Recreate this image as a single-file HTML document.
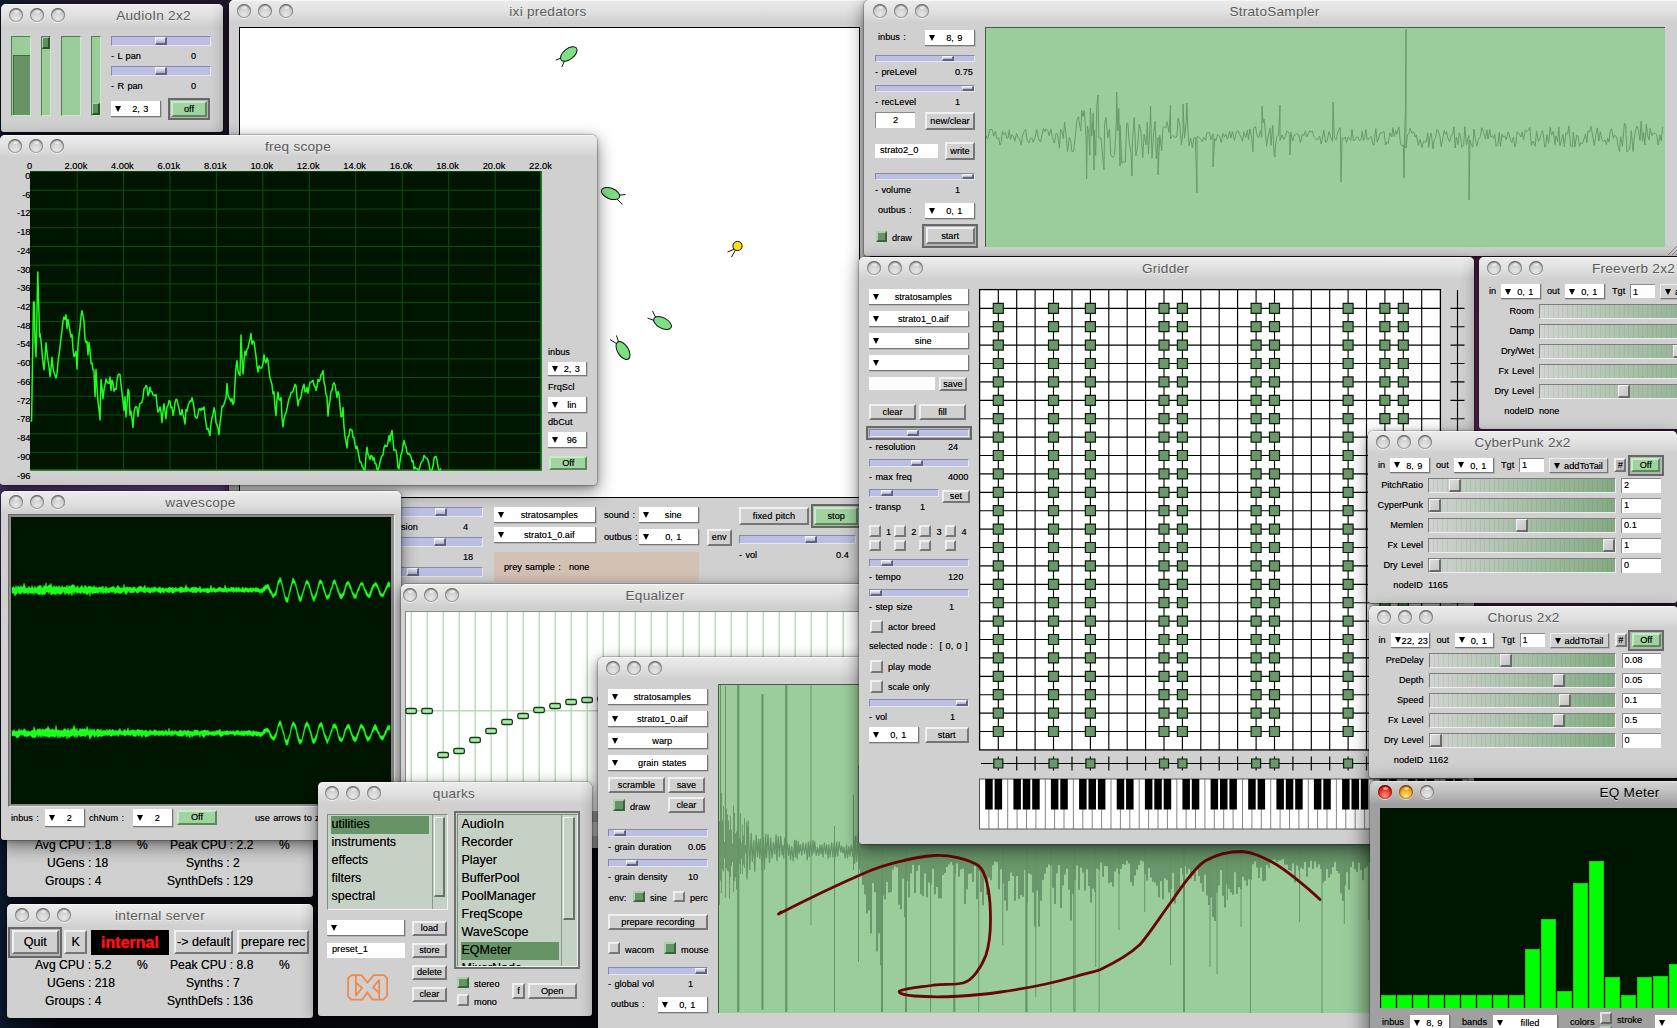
<!DOCTYPE html><html><head><meta charset="utf-8"><title>ixiQuarks</title><style>
*{box-sizing:border-box;margin:0;padding:0}
html,body{width:1677px;height:1028px;overflow:hidden;background:#0a0a12}
body{position:relative;font-family:"Liberation Sans",sans-serif;font-size:9.2px;word-spacing:.8px;color:#000;text-shadow:0 0 .45px rgba(0,0,0,.55);-webkit-font-smoothing:antialiased}
.a{position:absolute}
.win{position:absolute;background:#d0d0d0;border-radius:5px 5px 3px 3px;overflow:hidden;box-shadow:0 0 0 .5px rgba(0,0,0,.35),0 6px 17px 1px rgba(0,0,0,.46),0 1px 5px rgba(0,0,0,.25)}
.sh{position:absolute;border-radius:5px;box-shadow:0 0 0 .5px rgba(0,0,0,.35),0 6px 16px 2px rgba(0,0,0,.5)}
.tb{position:absolute;left:0;top:0;right:0;height:22px;background:linear-gradient(#ebebeb,#e2e2e2 45%,#d4d4d4 90%,#d0d0d0);border-top:1px solid #f6f6f6}
.tba{background:linear-gradient(#d2d2d2,#bdbdbd 50%,#a4a4a4);border-top:1px solid #e4e4e4}
.tt{position:absolute;top:0;height:22px;line-height:23.5px;font-size:13.6px;letter-spacing:.25px;word-spacing:0;color:#5a5a5a;white-space:pre;transform:translateX(-50%);text-shadow:0 1px 0 rgba(255,255,255,.5)}
.tl{position:absolute;width:14px;height:14px;border-radius:50%;background:radial-gradient(circle at 50% 75%,#e6e6e6 0%,#d2d2d2 45%,#bcbcbc 100%);box-shadow:inset 0 1.5px 2px rgba(0,0,0,.33),inset 0 0 0 1px rgba(0,0,0,.27),0 1px 0 rgba(255,255,255,.65)}
.tl:after{content:"";position:absolute;left:4.5px;top:2px;width:5px;height:3px;border-radius:50%;background:rgba(255,255,255,.55);filter:blur(.6px)}
.tlr{background:radial-gradient(circle at 50% 78%,#ff9a8a 0%,#ee2a1e 50%,#a80d08 100%)}
.tly{background:radial-gradient(circle at 50% 78%,#ffe88a 0%,#f5a218 50%,#b4580a 100%)}
.t{position:absolute;white-space:pre;line-height:12px;height:12px;margin-top:-6px}
.r{transform:translateX(-100%)}
.c{transform:translateX(-50%)}
.pu{position:absolute;background:#fff;border-right:1px solid #777;border-bottom:1px solid #777;box-shadow:.6px .6px 0 rgba(0,0,0,.22)}
.pu i{position:absolute;left:4px;top:50%;margin-top:-2.5px;width:0;height:0;border-left:3.2px solid transparent;border-right:3.2px solid transparent;border-top:6.4px solid #000}
.pu b{position:absolute;left:10px;right:0;top:50%;margin-top:-5.2px;line-height:12px;text-align:center;font-weight:normal;white-space:pre}
.pug{background:#d0d0d0;border-top:1px solid #eee;border-left:1px solid #eee;border-right:1px solid #777;border-bottom:1px solid #777}
.tf{position:absolute;background:#fff}
.tfb{border-top:1px solid #8a8a8a;border-left:1px solid #8a8a8a}
.tf b{position:absolute;left:5px;top:50%;margin-top:-7px;line-height:12px;font-weight:normal;white-space:pre}
.tfb b{left:2px;margin-top:-6.3px}
.bt{position:absolute;background:#d0d0d0;border-style:solid;border-width:2px;border-color:#f0f0f0 #757575 #757575 #f0f0f0;text-align:center;white-space:pre}
.bt b{position:absolute;left:0;right:0;top:50%;margin-top:-6px;line-height:12px;font-weight:normal}
.bg{background:#a0d3a0;border-color:#c6ecc6 #5a8a5a #5a8a5a #c6ecc6}
.fo{position:absolute;border:2px solid #686868;background:#b4b4b4}
.sl{position:absolute;background:#bcbfe2;border-top:1px solid #8688ad;border-left:1px solid #8688ad;border-bottom:1px solid #e4e5f5;border-right:1px solid #e4e5f5}
.kn{position:absolute;top:0;bottom:0;width:12px;background:linear-gradient(#e6e7f3,#c4c6de 60%,#a9abc6);border-style:solid;border-width:1px 2px 2px 1px;border-color:#f4f4fb #62647e #62647e #f4f4fb}
.cb{position:absolute;background:#d0d0d0;border-style:solid;border-width:2px;border-color:#efefef #777 #777 #efefef}
.cbg{background:#679467;border-color:#a9d2a9 #3c623c #3c623c #a9d2a9}
.es{position:absolute;border-top:1px solid #7d7d7d;border-left:1px solid #7d7d7d;border-bottom:1px solid #eee;border-right:1px solid #eee;background:repeating-linear-gradient(90deg,rgba(0,0,0,0) 0,rgba(0,0,0,0) 3.7px,rgba(60,100,60,.10) 3.7px,rgba(60,100,60,.10) 4.7px),linear-gradient(90deg,#d2d3d2,#b4c6b4 35%,#83aa83)}
.ek{position:absolute;top:0;bottom:0;width:12px;background:linear-gradient(135deg,#dcdcdc,#c2c6c2);border-style:solid;border-width:1px 2px 2px 1px;border-color:#f2f2f2 #6a6a6a #6a6a6a #f2f2f2}
.sv{font-size:12.1px;word-spacing:0}
.sv .t{line-height:16px;height:16px;margin-top:-8px}
.ls{font-size:12.5px}
.ls .t{line-height:16px;height:16px;margin-top:-8px}
</style></head><body><div class="a" style="left:0;top:0;width:1677px;height:1028px;background:radial-gradient(ellipse 520px 200px at 300px 488px,#8a55b0 0,#6a3f8e 40%,rgba(70,36,96,.0) 100%),radial-gradient(ellipse 300px 330px at 1500px 430px,#7a2f6c 0,#64285a 45%,rgba(60,25,60,0) 100%),linear-gradient(90deg,#0d1a30 0,rgba(10,14,26,0) 60px),linear-gradient(180deg,#241a30 0,#2a1c3a 45%,#120f1c 75%,#07080f 100%)"></div><div class="win" style="left:7px;top:783px;width:306px;height:114px;"><div class="tb"></div><div class="tl " style="left:8px;top:4px"></div><div class="tl " style="left:29px;top:4px"></div><div class="tl " style="left:50px;top:4px"></div><div class="tt" style="left:153px;">localhost server</div><div class="sv"><div class="t" style="left:28px;top:62px;">Avg CPU : 1.8</div><div class="t" style="left:130px;top:62px;">%</div><div class="t" style="left:163px;top:62px;">Peak CPU : 2.2</div><div class="t" style="left:272px;top:62px;">%</div><div class="t" style="left:40px;top:80px;">UGens : 18</div><div class="t" style="left:179px;top:80px;">Synths : 2</div><div class="t" style="left:38px;top:98px;">Groups : 4</div><div class="t" style="left:160px;top:98px;">SynthDefs : 129</div></div></div><div class="win" style="left:7px;top:904px;width:306px;height:114px;"><div class="tb"></div><div class="tl " style="left:8px;top:4px"></div><div class="tl " style="left:29px;top:4px"></div><div class="tl " style="left:50px;top:4px"></div><div class="tt" style="left:153px;">internal server</div><div class="sv" style="font-size:12.6px"><div class="fo" style="left:1.2px;top:22.7px;width:53.9px;height:30.9px;"></div><div class="bt" style="left:4.5px;top:26px;width:47.4px;height:24.4px;"><b>Quit</b></div><div class="bt" style="left:57px;top:26px;width:23.4px;height:24.4px;"><b>K</b></div><div class="a" style="left:84px;top:26px;width:78px;height:24.5px;background:#000"></div><div class="t c" style="left:123px;top:38.5px;"><span style="color:#ff1010;font-weight:bold;font-size:16px;letter-spacing:0;text-shadow:0 0 1px #ff1010">internal</span></div><div class="bt" style="left:166.5px;top:26px;width:59.9px;height:24.4px;"><b>-> default</b></div><div class="bt" style="left:230px;top:26px;width:72.4px;height:24.4px;"><b>prepare rec</b></div></div><div class="sv"><div class="t" style="left:28px;top:61px;">Avg CPU : 5.2</div><div class="t" style="left:130px;top:61px;">%</div><div class="t" style="left:163px;top:61px;">Peak CPU : 8.8</div><div class="t" style="left:272px;top:61px;">%</div><div class="t" style="left:40px;top:79px;">UGens : 218</div><div class="t" style="left:179px;top:79px;">Synths : 7</div><div class="t" style="left:38px;top:97px;">Groups : 4</div><div class="t" style="left:160px;top:97px;">SynthDefs : 136</div></div></div><div class="win" style="left:1px;top:4px;width:222px;height:128px;"><div class="tb"></div><div class="tl " style="left:8px;top:4px"></div><div class="tl " style="left:29px;top:4px"></div><div class="tl " style="left:50px;top:4px"></div><div class="tt" style="left:152.5px;">AudioIn 2x2</div><div class="a" style="left:10px;top:32px;width:19.5px;height:79.5px;background:#9bcd9b;border-top:1px solid #4f7f4f;border-left:1px solid #4f7f4f;border-right:1px solid #c9e9c9;border-bottom:1px solid #c9e9c9"></div><div class="a" style="left:11.5px;top:51px;width:17.0px;height:59.5px;background:#679467;border-top:1px solid #3f6a3f;border-left:1px solid #3f6a3f"></div><div class="a" style="left:60px;top:32px;width:19.5px;height:79.5px;background:#9bcd9b;border-top:1px solid #4f7f4f;border-left:1px solid #4f7f4f;border-right:1px solid #c9e9c9;border-bottom:1px solid #c9e9c9"></div><div class="a" style="left:40px;top:32px;width:9.5px;height:79.5px;background:#9bcd9b;border-top:1px solid #4f7f4f;border-left:1px solid #4f7f4f;border-right:1px solid #c9e9c9;border-bottom:1px solid #c9e9c9"></div><div class="a" style="left:41px;top:33px;width:7.5px;height:12px;background:#5e8f5e;border-style:solid;border-width:1px 2px 2px 1px;border-color:#a9d2a9 #2f4f2f #2f4f2f #a9d2a9"></div><div class="a" style="left:90px;top:32px;width:9.5px;height:79.5px;background:#9bcd9b;border-top:1px solid #4f7f4f;border-left:1px solid #4f7f4f;border-right:1px solid #c9e9c9;border-bottom:1px solid #c9e9c9"></div><div class="a" style="left:91px;top:99px;width:7.5px;height:12px;background:#5e8f5e;border-style:solid;border-width:1px 2px 2px 1px;border-color:#a9d2a9 #2f4f2f #2f4f2f #a9d2a9"></div><div class="sl" style="left:110px;top:32px;width:99.5px;height:9.5px;"><div class="kn" style="left:43px"></div></div><div class="t" style="left:110px;top:52px;">- L pan</div><div class="t" style="left:190px;top:52px;">0</div><div class="sl" style="left:110px;top:62px;width:99.5px;height:9.5px;"><div class="kn" style="left:43px"></div></div><div class="t" style="left:110px;top:82px;">- R pan</div><div class="t" style="left:190px;top:82px;">0</div><div class="pu" style="left:110px;top:97px;width:49.5px;height:16.1px;"><i></i><b>2, 3</b></div><div class="fo" style="left:166.7px;top:93.7px;width:42.5px;height:22.0px;"></div><div class="bt bg" style="left:170px;top:97px;width:36.0px;height:15.5px;"><b>off</b></div></div><div class="win" style="left:229px;top:0px;width:641px;height:592px;"><div class="tb"></div><div class="tl " style="left:8px;top:4px"></div><div class="tl " style="left:29px;top:4px"></div><div class="tl " style="left:50px;top:4px"></div><div class="tt" style="left:319px;">ixi predators</div><div class="a" style="left:9.5px;top:26.5px;width:621.5px;height:471.5px;background:#fff;border:1.3px solid #000"></div><svg class="a" style="left:0;top:0" width="641" height="592" viewBox="229 0 641 592"><line x1="563.8" y1="57" x2="555.8" y2="60" stroke="#111" stroke-width="1"/><line x1="565.8" y1="58" x2="561.8" y2="67" stroke="#111" stroke-width="1"/><ellipse cx="568.8" cy="54" rx="9.7" ry="5.3" transform="rotate(-38 568.8 54)" fill="#7fdf83" stroke="#111" stroke-width="1"/><line x1="616.5" y1="195.5" x2="625.5" y2="194.5" stroke="#111" stroke-width="1"/><line x1="615.5" y1="197.5" x2="622.5" y2="204.5" stroke="#111" stroke-width="1"/><ellipse cx="610.5" cy="193.5" rx="9.7" ry="5.3" transform="rotate(22 610.5 193.5)" fill="#7fdf83" stroke="#111" stroke-width="1"/><line x1="656.5" y1="319" x2="652.5" y2="311" stroke="#111" stroke-width="1"/><line x1="655.5" y1="321" x2="647.5" y2="318" stroke="#111" stroke-width="1"/><ellipse cx="662.5" cy="323" rx="9.7" ry="5.3" transform="rotate(28 662.5 323)" fill="#7fdf83" stroke="#111" stroke-width="1"/><line x1="619" y1="343.5" x2="616.5" y2="335.5" stroke="#111" stroke-width="1"/><line x1="618" y1="344.5" x2="610" y2="339.5" stroke="#111" stroke-width="1"/><ellipse cx="623" cy="350.5" rx="10" ry="5.4" transform="rotate(58 623 350.5)" fill="#7fdf83" stroke="#111" stroke-width="1"/><line x1="734.5" y1="249" x2="727.5" y2="252" stroke="#111" stroke-width="1"/><line x1="735.5" y1="250" x2="731.5" y2="257" stroke="#111" stroke-width="1"/><ellipse cx="737.5" cy="246" rx="4.6" ry="4.6" transform="rotate(0 737.5 246)" fill="#ffe600" stroke="#111" stroke-width="1"/></svg><div class="sl" style="left:151px;top:507px;width:102.5px;height:9.5px;"><div class="kn" style="left:54px"></div></div><div class="t" style="left:172px;top:527px;">sion</div><div class="t" style="left:234px;top:527px;">4</div><div class="sl" style="left:151px;top:537px;width:102.5px;height:9.5px;"><div class="kn" style="left:53px"></div></div><div class="t" style="left:234px;top:557px;">18</div><div class="sl" style="left:151px;top:567px;width:102.5px;height:9.5px;"><div class="kn" style="left:26px"></div></div><div class="pu" style="left:265px;top:507px;width:101.5px;height:15.6px;"><i></i><b>stratosamples</b></div><div class="pu" style="left:265px;top:527px;width:101.5px;height:15.6px;"><i></i><b>strato1_0.aif</b></div><div class="t" style="left:375px;top:515px;">sound :</div><div class="pu" style="left:410px;top:507px;width:59.5px;height:15.6px;"><i></i><b>sine</b></div><div class="t" style="left:375px;top:537px;">outbus :</div><div class="pu" style="left:410px;top:529px;width:59.5px;height:16.1px;"><i></i><b>0, 1</b></div><div class="bt" style="left:477.5px;top:529px;width:25.4px;height:16.9px;"><b>env</b></div><div class="a" style="left:265px;top:552px;width:205px;height:30px;background:#d3c1b4"></div><div class="t" style="left:275px;top:567px;">prey sample :</div><div class="t" style="left:340px;top:567px;">none</div><div class="bt" style="left:510px;top:507px;width:69.9px;height:17.9px;"><b>fixed pitch</b></div><div class="fo" style="left:581.7px;top:503.7px;width:50.9px;height:24.4px;"></div><div class="bt bg" style="left:585px;top:507px;width:44.4px;height:17.9px;"><b>stop</b></div><div class="sl" style="left:510px;top:535px;width:117px;height:9px;"><div class="kn" style="left:65px"></div></div><div class="t" style="left:510px;top:555px;">- vol</div><div class="t" style="left:607px;top:555px;">0.4</div></div><div class="win" style="left:864px;top:0px;width:830px;height:256px;"><div class="tb"></div><div class="tl " style="left:9px;top:4px"></div><div class="tl " style="left:30px;top:4px"></div><div class="tl " style="left:51px;top:4px"></div><div class="tt" style="left:410.5px;">StratoSampler</div><div class="t" style="left:14px;top:37px;">inbus :</div><div class="pu" style="left:61px;top:30px;width:49.5px;height:15.6px;"><i></i><b>8, 9</b></div><div class="sl" style="left:11px;top:54.5px;width:99.5px;height:7.5px;"><div class="kn" style="left:66px"></div></div><div class="t" style="left:11px;top:72px;">- preLevel</div><div class="t" style="left:91px;top:72px;">0.75</div><div class="sl" style="left:11px;top:84.5px;width:99.5px;height:7.5px;"><div class="kn" style="left:86px"></div></div><div class="t" style="left:11px;top:102px;">- recLevel</div><div class="t" style="left:91px;top:102px;">1</div><div class="tf tfb" style="left:11px;top:112.3px;width:40px;height:15.7px;"><b><span style="padding-left:15px">2</span></b></div><div class="bt" style="left:61.2px;top:112.2px;width:49.6px;height:17.5px;"><b>new/clear</b></div><div class="tf" style="left:11px;top:144px;width:63px;height:14px;"><b>strato2_0</b></div><div class="bt" style="left:81.2px;top:142.2px;width:29.6px;height:17.5px;"><b>write</b></div><div class="sl" style="left:11px;top:172.5px;width:99.5px;height:7.5px;"><div class="kn" style="left:86px"></div></div><div class="t" style="left:11px;top:190px;">- volume</div><div class="t" style="left:91px;top:190px;">1</div><div class="t" style="left:14px;top:210px;">outbus :</div><div class="pu" style="left:61px;top:203px;width:49.5px;height:15.6px;"><i></i><b>0, 1</b></div><div class="cb cbg" style="left:12px;top:231px;width:10.5px;height:11px;"></div><div class="t" style="left:28px;top:238px;">draw</div><div class="fo" style="left:58.3px;top:224.1px;width:55.6px;height:23.5px;"></div><div class="bt" style="left:61.6px;top:227.4px;width:49.1px;height:17.0px;"><b>start</b></div><div class="a" style="left:121px;top:27px;width:679.5px;height:219.5px;background:#9bcd9b;border-top:1px solid #3f5f3f;border-left:1px solid #3f5f3f"></div><svg class="a" style="left:0;top:0" width="830" height="256" viewBox="864 0 830 256"><path d="M986.0 134.8 L987.2 138.8 L988.2 137.3 L989.6 129.8 L991.1 129.3 L992.5 130.0 L993.6 136.3 L995.4 131.1 L996.7 138.4 L998.6 137.7 L1000.0 145.0 L1001.1 142.5 L1002.4 131.5 L1003.5 134.6 L1005.3 132.3 L1006.9 138.6 L1008.2 137.4 L1009.3 129.8 L1010.5 139.3 L1011.9 134.7 L1013.5 136.6 L1014.8 141.3 L1016.5 133.4 L1018.1 137.2 L1020.0 140.1 L1021.3 145.1 L1022.4 136.2 L1024.1 131.7 L1025.6 129.3 L1027.3 140.7 L1028.9 142.9 L1030.2 139.5 L1031.8 137.8 L1033.2 142.2 L1035.2 136.8 L1036.8 129.6 L1038.5 138.8 L1040.5 142.0 L1041.8 135.7 L1043.5 128.4 L1044.9 131.5 L1046.1 129.0 L1047.8 130.5 L1049.1 135.6 L1050.9 128.9 L1052.4 137.5 L1054.3 143.1 L1056.1 133.0 L1057.6 134.7 L1059.4 148.2 L1060.6 129.6 L1061.8 131.0 L1063.3 138.5 L1064.6 122.3 L1066.0 134.3 L1067.6 151.6 L1069.3 137.2 L1070.9 141.8 L1071.9 151.5 L1073.7 151.2 L1075.5 134.0 L1076.9 120.0 L1078.5 116.6 L1079.6 124.6 L1080.8 131.1 L1081.8 110.3 L1083.0 116.5 L1084.3 110.3 L1086.2 140.9 L1086.6 179.0 L1087.4 125.9 L1088.7 131.8 L1089.8 155.2 L1090.4 108.0 L1091.8 136.1 L1093.3 112.8 L1094.0 170.0 L1094.4 130.0 L1095.7 155.5 L1096.8 106.7 L1098.0 95.0 L1098.8 137.8 L1099.9 138.4 L1101.0 137.8 L1102.9 159.0 L1104.0 170.0 L1104.6 124.2 L1106.0 117.4 L1107.8 138.0 L1109.5 128.9 L1110.8 154.7 L1112.8 157.6 L1114.6 154.8 L1116.3 122.6 L1116.7 92.0 L1117.8 130.8 L1118.8 108.5 L1120.0 166.0 L1120.1 125.3 L1121.8 163.4 L1123.3 161.6 L1125.3 162.2 L1126.6 123.9 L1127.8 122.6 L1129.1 141.4 L1131.0 152.9 L1132.0 176.0 L1132.4 142.5 L1134.2 117.4 L1135.9 155.8 L1137.7 146.6 L1139.2 124.0 L1140.9 131.5 L1142.7 157.6 L1144.1 134.3 L1146.1 144.7 L1147.3 122.1 L1148.4 153.7 L1150.2 122.9 L1150.5 106.0 L1152.0 158.3 L1153.7 132.2 L1155.2 121.3 L1156.3 158.8 L1157.9 137.5 L1158.0 175.0 L1159.8 135.3 L1161.7 150.9 L1162.9 127.3 L1164.2 126.8 L1165.8 128.0 L1167.2 121.7 L1169.1 132.6 L1170.5 105.0 L1170.6 139.0 L1172.5 135.2 L1174.4 137.0 L1175.9 137.4 L1177.0 135.8 L1178.1 118.0 L1179.9 125.3 L1181.4 144.6 L1183.0 131.3 L1183.0 104.0 L1184.5 138.3 L1186.3 120.6 L1186.8 103.0 L1187.8 128.4 L1189.1 145.8 L1190.6 138.1 L1192.4 147.8 L1193.8 138.7 L1195.3 137.1 L1197.0 193.0 L1197.0 136.6 L1198.6 136.9 L1200.5 138.9 L1202.4 142.0 L1203.6 137.4 L1205.6 140.4 L1206.7 133.1 L1208.2 132.5 L1209.4 132.5 L1211.1 139.7 L1213.0 133.6 L1213.0 167.0 L1214.7 138.3 L1215.8 141.0 L1217.8 134.3 L1219.7 136.3 L1221.2 142.6 L1223.1 133.5 L1224.5 137.1 L1225.8 133.9 L1227.2 139.1 L1228.2 137.3 L1229.6 131.0 L1230.9 138.0 L1232.5 131.5 L1234.4 140.3 L1236.4 131.8 L1237.7 130.5 L1239.5 134.3 L1240.6 136.3 L1242.5 141.4 L1243.8 131.8 L1245.7 137.7 L1247.4 130.1 L1248.4 139.6 L1249.9 129.1 L1251.8 138.9 L1253.0 152.0 L1253.6 128.1 L1255.5 126.5 L1257.3 136.4 L1258.7 137.8 L1260.6 130.6 L1261.7 137.4 L1262.0 106.0 L1263.0 122.8 L1264.1 119.2 L1265.3 131.1 L1266.6 146.3 L1267.9 137.0 L1269.1 132.2 L1270.1 127.9 L1271.1 145.3 L1272.7 125.2 L1274.1 154.4 L1275.0 157.0 L1275.3 148.0 L1276.7 137.0 L1278.5 135.0 L1280.0 105.0 L1280.0 140.4 L1282.0 134.9 L1283.8 139.5 L1285.5 136.2 L1286.8 131.3 L1288.0 131.7 L1289.7 134.6 L1290.0 155.0 L1290.9 132.2 L1292.7 141.1 L1294.4 135.0 L1295.6 135.1 L1297.1 133.4 L1298.5 134.7 L1300.5 142.6 L1302.0 134.5 L1304.0 135.3 L1305.4 130.9 L1306.7 136.9 L1308.2 133.8 L1309.7 130.7 L1311.0 132.0 L1312.4 131.1 L1313.4 135.0 L1314.7 137.7 L1316.2 139.8 L1317.8 139.4 L1319.7 136.0 L1321.1 144.1 L1322.2 139.7 L1323.8 130.2 L1325.7 142.8 L1327.3 140.0 L1329.1 131.6 L1330.6 137.0 L1332.5 141.6 L1333.0 102.0 L1334.3 137.9 L1336.2 139.7 L1337.9 132.0 L1338.9 129.1 L1340.3 127.6 L1341.0 182.0 L1342.1 137.8 L1343.7 139.1 L1345.4 136.9 L1346.4 142.7 L1348.2 137.0 L1349.7 139.2 L1350.8 140.6 L1352.0 129.4 L1353.3 140.4 L1354.5 140.6 L1356.5 137.0 L1357.9 136.9 L1359.5 141.0 L1361.2 138.8 L1362.2 131.3 L1363.5 140.5 L1364.8 137.7 L1365.8 129.5 L1367.1 139.2 L1368.8 139.2 L1370.1 137.1 L1371.5 136.7 L1372.6 143.4 L1373.8 145.2 L1375.8 128.7 L1377.2 141.9 L1379.2 136.6 L1380.5 132.7 L1382.4 132.6 L1384.0 131.2 L1385.5 145.0 L1386.7 142.1 L1388.2 143.6 L1389.9 132.8 L1391.8 136.9 L1392.8 127.4 L1394.3 136.5 L1395.6 130.5 L1396.9 134.2 L1398.8 126.7 L1400.5 143.3 L1401.6 145.7 L1403.4 145.1 L1404.0 178.0 L1404.6 135.1 L1405.5 108.0 L1406.0 29.0 L1406.0 148.1 L1407.6 134.9 L1409.1 132.9 L1410.1 128.4 L1411.9 133.1 L1413.9 132.1 L1415.1 137.1 L1416.3 135.0 L1418.3 145.7 L1420.1 139.2 L1422.0 147.6 L1423.6 141.3 L1424.6 141.7 L1426.1 142.2 L1427.7 132.8 L1428.8 147.4 L1429.9 136.7 L1431.2 133.0 L1433.0 149.0 L1434.2 139.8 L1435.5 137.8 L1436.9 129.5 L1438.1 130.6 L1440.0 137.0 L1441.2 146.7 L1443.2 136.4 L1444.3 130.3 L1445.4 134.2 L1446.5 131.6 L1447.8 138.0 L1449.7 142.0 L1451.1 135.8 L1452.6 135.0 L1453.9 126.9 L1455.2 148.0 L1456.3 137.0 L1458.0 144.8 L1459.2 132.8 L1460.4 135.6 L1461.9 147.2 L1463.7 144.8 L1464.8 126.6 L1466.5 145.3 L1467.9 138.2 L1468.9 135.5 L1469.0 200.0 L1470.0 140.0 L1470.9 143.3 L1472.7 147.1 L1474.0 129.1 L1475.1 137.2 L1476.8 146.1 L1478.5 139.2 L1480.3 136.6 L1481.8 127.6 L1483.6 132.4 L1485.5 139.1 L1486.9 129.9 L1488.1 138.9 L1489.8 129.5 L1490.9 137.2 L1492.5 135.5 L1493.7 138.3 L1494.7 133.9 L1496.2 146.3 L1497.8 144.4 L1499.3 132.4 L1500.5 146.4 L1502.2 134.0 L1503.2 137.0 L1504.9 136.0 L1506.2 139.6 L1508.1 132.1 L1509.1 134.5 L1510.6 139.9 L1511.8 142.5 L1513.5 137.0 L1514.7 147.0 L1516.0 143.1 L1517.2 131.9 L1519.0 133.6 L1521.0 137.0 L1522.1 131.9 L1523.6 139.6 L1525.5 129.9 L1526.9 131.6 L1528.9 129.8 L1529.9 127.5 L1531.3 145.3 L1533.2 141.1 L1535.2 146.3 L1536.5 130.9 L1538.5 141.5 L1539.5 139.6 L1540.9 135.1 L1542.2 130.5 L1543.2 133.1 L1544.6 146.9 L1545.7 147.1 L1546.9 134.8 L1548.7 143.3 L1550.1 127.3 L1551.6 135.1 L1553.5 131.1 L1554.9 145.2 L1555.9 135.8 L1557.7 141.9 L1558.8 126.9 L1559.9 145.9 L1561.1 141.5 L1563.0 134.4 L1564.3 146.9 L1565.9 132.7 L1567.6 134.0 L1568.9 125.9 L1570.6 145.9 L1572.3 146.7 L1573.3 132.0 L1574.8 147.1 L1576.7 135.3 L1578.0 136.1 L1579.5 146.4 L1580.7 143.0 L1582.4 143.6 L1584.2 138.6 L1585.5 133.9 L1586.9 142.6 L1587.9 130.9 L1589.7 132.1 L1590.8 126.2 L1592.3 134.0 L1594.3 145.5 L1596.3 132.5 L1597.4 127.8 L1598.9 141.0 L1600.3 131.6 L1601.7 139.0 L1603.4 142.0 L1605.2 140.0 L1606.4 144.8 L1607.7 137.9 L1609.0 142.0 L1610.2 131.5 L1611.5 128.7 L1613.4 138.2 L1614.7 135.2 L1616.7 137.1 L1617.9 144.7 L1619.6 151.4 L1620.7 136.7 L1622.5 146.3 L1624.4 123.0 L1625.7 125.9 L1626.9 152.0 L1628.5 150.4 L1629.8 148.0 L1631.3 130.6 L1633.1 151.5 L1634.2 139.0 L1635.8 129.0 L1637.2 126.1 L1638.4 130.4 L1640.0 140.5 L1641.2 121.0 L1642.5 141.3 L1643.7 132.5 L1644.9 145.0 L1646.4 124.0 L1647.5 135.0 L1649.1 139.8 L1650.2 128.4 L1651.9 135.5 L1653.2 133.1 L1655.1 133.4 L1656.7 134.6 L1658.1 144.8 L1660.1 135.0 L1661.3 140.9 L1662.5 126.8" fill="none" stroke="#679a6a" stroke-width="1"/></svg><svg class="a" style="left:802px;top:244px" width="12" height="12"><path d="M11 2L2 11M11 6L6 11M11 9.5L9.5 11" stroke="#8a8a8a" stroke-width="1"/></svg></div><div class="win" style="left:0px;top:135px;width:597px;height:350px;"><div class="tb"></div><div class="tl " style="left:8px;top:4px"></div><div class="tl " style="left:29px;top:4px"></div><div class="tl " style="left:50px;top:4px"></div><div class="tt" style="left:298px;">freq scope</div><div class="t c" style="left:29.5px;top:31px;font-size:9.3px">0</div><div class="t c" style="left:75.95px;top:31px;font-size:9.3px">2.00k</div><div class="t c" style="left:122.4px;top:31px;font-size:9.3px">4.00k</div><div class="t c" style="left:168.85px;top:31px;font-size:9.3px">6.01k</div><div class="t c" style="left:215.3px;top:31px;font-size:9.3px">8.01k</div><div class="t c" style="left:261.75px;top:31px;font-size:9.3px">10.0k</div><div class="t c" style="left:308.2px;top:31px;font-size:9.3px">12.0k</div><div class="t c" style="left:354.65px;top:31px;font-size:9.3px">14.0k</div><div class="t c" style="left:401.1px;top:31px;font-size:9.3px">16.0k</div><div class="t c" style="left:447.55px;top:31px;font-size:9.3px">18.0k</div><div class="t c" style="left:494.0px;top:31px;font-size:9.3px">20.0k</div><div class="t c" style="left:540.45px;top:31px;font-size:9.3px">22.0k</div><div class="t r" style="left:30.5px;top:41.0px;font-size:9.3px">0</div><div class="t r" style="left:30.5px;top:59.72px;font-size:9.3px">-6</div><div class="t r" style="left:30.5px;top:78.44px;font-size:9.3px">-12</div><div class="t r" style="left:30.5px;top:97.16px;font-size:9.3px">-18</div><div class="t r" style="left:30.5px;top:115.88px;font-size:9.3px">-24</div><div class="t r" style="left:30.5px;top:134.6px;font-size:9.3px">-30</div><div class="t r" style="left:30.5px;top:153.32px;font-size:9.3px">-36</div><div class="t r" style="left:30.5px;top:172.04px;font-size:9.3px">-42</div><div class="t r" style="left:30.5px;top:190.76px;font-size:9.3px">-48</div><div class="t r" style="left:30.5px;top:209.48px;font-size:9.3px">-54</div><div class="t r" style="left:30.5px;top:228.2px;font-size:9.3px">-60</div><div class="t r" style="left:30.5px;top:246.92px;font-size:9.3px">-66</div><div class="t r" style="left:30.5px;top:265.64px;font-size:9.3px">-72</div><div class="t r" style="left:30.5px;top:284.36px;font-size:9.3px">-78</div><div class="t r" style="left:30.5px;top:303.08px;font-size:9.3px">-84</div><div class="t r" style="left:30.5px;top:321.8px;font-size:9.3px">-90</div><div class="t r" style="left:30.5px;top:340.52px;font-size:9.3px">-96</div><svg class="a" style="left:30px;top:36px" width="511.5" height="299.5" viewBox="30 171 511.5 299.5"><rect x="30" y="171" width="511.5" height="299.5" fill="#001500"/><path d="M77.1 171V470.5M123.5 171V470.5M170.0 171V470.5M216.4 171V470.5M262.9 171V470.5M309.3 171V470.5M355.8 171V470.5M402.2 171V470.5M448.7 171V470.5M495.1 171V470.5M541.6 171V470.5M30 171.6H541.5M30 190.3H541.5M30 209.0H541.5M30 227.8H541.5M30 246.5H541.5M30 265.2H541.5M30 283.9H541.5M30 302.6H541.5M30 321.4H541.5M30 340.1H541.5M30 358.8H541.5M30 377.5H541.5M30 396.2H541.5M30 415.0H541.5M30 433.7H541.5M30 452.4H541.5M30 471.1H541.5" stroke="#075207" stroke-width="1" fill="none"/><path d="M541.0 171V470.5M30 470.0H541.5" stroke="#2f9a2f" stroke-width="1" fill="none"/><path d="M31.0 420.5 L31.0 421.0 L31.6 421.0 L32.0 393.8 L32.2 380.0 L33.0 331.7 L33.5 302.0 L34.0 302.2 L34.2 302.0 L35.0 342.0 L35.0 342.3 L36.0 356.1 L36.0 357.0 L36.8 320.0 L37.0 309.4 L37.8 272.0 L38.0 279.7 L38.6 300.0 L39.0 314.3 L39.6 337.0 L40.0 333.4 L41.0 340.5 L42.0 351.8 L43.0 363.2 L44.0 369.8 L45.0 358.4 L46.0 342.8 L47.0 352.4 L48.0 360.4 L49.0 366.6 L50.0 376.5 L51.0 368.6 L52.0 357.2 L53.0 367.7 L54.0 372.6 L55.0 375.2 L56.0 378.0 L57.0 373.8 L58.0 361.8 L59.0 354.9 L60.0 347.4 L61.0 337.9 L62.0 330.7 L63.0 320.8 L64.0 316.9 L65.0 319.6 L66.0 314.8 L67.0 328.4 L68.0 319.4 L69.0 325.2 L70.0 331.2 L71.0 337.0 L72.0 334.6 L73.0 348.8 L74.0 356.7 L75.0 355.0 L76.0 351.3 L77.0 369.0 L78.0 345.5 L79.0 335.5 L80.0 327.6 L81.0 316.2 L82.0 310.7 L83.0 315.3 L84.0 321.1 L85.0 339.1 L86.0 342.8 L87.0 341.3 L88.0 355.0 L89.0 342.6 L90.0 350.4 L91.0 363.4 L92.0 363.2 L93.0 369.6 L94.0 370.5 L95.0 396.6 L96.0 369.2 L97.0 387.3 L98.0 401.6 L99.0 409.4 L100.0 419.9 L101.0 379.4 L102.0 387.8 L103.0 398.7 L104.0 389.7 L105.0 385.4 L106.0 379.1 L107.0 381.7 L108.0 383.1 L109.0 383.4 L110.0 376.9 L111.0 390.4 L112.0 380.1 L113.0 382.5 L114.0 391.2 L115.0 388.8 L116.0 389.3 L117.0 380.6 L118.0 375.0 L119.0 374.1 L120.0 374.4 L121.0 384.7 L122.0 392.8 L123.0 401.1 L124.0 410.4 L125.0 396.8 L126.0 416.9 L127.0 404.5 L128.0 389.2 L129.0 391.7 L130.0 415.1 L131.0 410.9 L132.0 419.1 L133.0 427.4 L134.0 412.8 L135.0 407.8 L136.0 406.5 L137.0 407.6 L138.0 416.4 L139.0 408.3 L140.0 403.7 L141.0 403.1 L142.0 402.1 L143.0 397.3 L144.0 388.9 L145.0 388.0 L146.0 385.5 L147.0 386.9 L148.0 395.7 L149.0 393.3 L150.0 387.2 L151.0 391.8 L152.0 391.8 L153.0 395.1 L154.0 395.1 L155.0 395.8 L156.0 394.5 L157.0 404.9 L158.0 412.2 L159.0 410.6 L160.0 407.0 L161.0 411.9 L162.0 422.7 L163.0 410.6 L164.0 403.8 L165.0 411.1 L166.0 418.8 L167.0 407.2 L168.0 405.6 L169.0 400.7 L170.0 401.2 L171.0 407.7 L172.0 407.0 L173.0 415.4 L174.0 411.0 L175.0 402.8 L176.0 399.2 L177.0 399.9 L178.0 404.3 L179.0 408.5 L180.0 414.6 L181.0 414.8 L182.0 409.5 L183.0 414.9 L184.0 418.9 L185.0 424.1 L186.0 409.6 L187.0 411.3 L188.0 405.9 L189.0 403.0 L190.0 401.0 L191.0 401.5 L192.0 397.7 L193.0 402.2 L194.0 407.6 L195.0 416.2 L196.0 418.0 L197.0 418.0 L198.0 414.2 L199.0 409.0 L200.0 408.6 L201.0 410.5 L202.0 407.9 L203.0 409.5 L204.0 407.0 L205.0 415.6 L206.0 423.7 L207.0 429.4 L208.0 428.5 L209.0 432.0 L210.0 435.5 L211.0 423.5 L212.0 417.4 L213.0 414.7 L214.0 407.8 L215.0 411.8 L216.0 422.8 L217.0 424.9 L218.0 428.1 L219.0 434.6 L220.0 422.9 L221.0 416.7 L222.0 406.2 L223.0 406.6 L224.0 404.2 L225.0 401.0 L226.0 398.1 L227.0 383.6 L228.0 395.0 L229.0 397.3 L230.0 399.2 L231.0 401.6 L232.0 398.6 L233.0 404.5 L234.0 402.1 L235.0 382.6 L236.0 367.2 L237.0 360.7 L238.0 370.5 L239.0 374.1 L240.0 375.5 L241.0 334.9 L242.0 357.6 L243.0 373.9 L244.0 360.7 L245.0 351.0 L246.0 355.2 L247.0 349.4 L248.0 347.8 L249.0 343.2 L250.0 339.0 L251.0 333.4 L252.0 344.3 L253.0 340.9 L254.0 341.8 L255.0 349.1 L256.0 356.1 L257.0 366.2 L258.0 372.0 L259.0 365.9 L260.0 367.9 L261.0 368.2 L262.0 367.0 L263.0 363.6 L264.0 354.8 L265.0 360.8 L266.0 362.8 L267.0 358.1 L268.0 360.5 L269.0 370.5 L270.0 378.2 L271.0 381.0 L272.0 384.8 L273.0 393.8 L274.0 391.8 L275.0 407.2 L276.0 415.6 L277.0 399.6 L278.0 392.2 L279.0 399.5 L280.0 400.3 L281.0 397.4 L282.0 418.0 L283.0 426.8 L284.0 418.8 L285.0 415.0 L286.0 412.9 L287.0 408.6 L288.0 403.1 L289.0 399.0 L290.0 396.9 L291.0 392.6 L292.0 392.4 L293.0 391.4 L294.0 387.7 L295.0 384.3 L296.0 385.9 L297.0 397.2 L298.0 405.7 L299.0 399.8 L300.0 399.2 L301.0 396.9 L302.0 390.8 L303.0 387.1 L304.0 384.2 L305.0 392.0 L306.0 391.3 L307.0 387.5 L308.0 393.2 L309.0 387.7 L310.0 382.4 L311.0 382.2 L312.0 381.2 L313.0 380.3 L314.0 385.5 L315.0 386.5 L316.0 390.4 L317.0 386.8 L318.0 379.2 L319.0 381.5 L320.0 379.9 L321.0 374.5 L322.0 373.8 L323.0 370.6 L324.0 382.0 L325.0 386.0 L326.0 394.5 L327.0 396.9 L328.0 416.1 L329.0 405.5 L330.0 400.4 L331.0 391.5 L332.0 390.6 L333.0 384.3 L334.0 382.7 L335.0 384.8 L336.0 391.1 L337.0 397.4 L338.0 391.4 L339.0 394.4 L340.0 405.9 L341.0 417.0 L342.0 416.2 L343.0 407.6 L344.0 427.2 L345.0 436.1 L346.0 442.2 L347.0 447.9 L348.0 436.5 L349.0 435.9 L350.0 429.0 L351.0 429.7 L352.0 430.1 L353.0 437.4 L354.0 437.5 L355.0 444.6 L356.0 448.8 L357.0 446.2 L358.0 450.9 L359.0 456.4 L360.0 462.1 L361.0 462.3 L362.0 466.0 L363.0 467.4 L364.0 470.0 L365.0 470.0 L366.0 455.3 L367.0 447.2 L368.0 454.3 L369.0 456.5 L370.0 459.5 L371.0 455.3 L372.0 456.0 L373.0 460.0 L374.0 457.4 L375.0 463.6 L376.0 463.8 L377.0 469.2 L378.0 470.0 L379.0 467.1 L380.0 462.1 L381.0 458.4 L382.0 455.9 L383.0 455.0 L384.0 447.8 L385.0 444.9 L386.0 446.6 L387.0 446.2 L388.0 442.1 L389.0 435.6 L390.0 441.4 L391.0 434.0 L392.0 430.5 L393.0 440.1 L394.0 450.5 L395.0 449.8 L396.0 450.3 L397.0 456.2 L398.0 467.9 L399.0 468.7 L400.0 461.3 L401.0 454.4 L402.0 452.3 L403.0 445.5 L404.0 440.5 L405.0 444.2 L406.0 446.9 L407.0 452.4 L408.0 454.2 L409.0 453.4 L410.0 455.1 L411.0 456.9 L412.0 461.8 L413.0 460.7 L414.0 469.1 L415.0 466.9 L416.0 468.6 L417.0 468.8 L418.0 470.0 L419.0 470.0 L420.0 466.4 L421.0 462.9 L422.0 461.4 L423.0 460.3 L424.0 455.4 L425.0 457.0 L426.0 457.9 L427.0 458.3 L428.0 460.3 L429.0 464.3 L430.0 470.0 L431.0 470.0 L432.0 470.0 L433.0 466.3 L434.0 458.3 L435.0 457.0 L436.0 456.5 L437.0 460.0 L438.0 467.3 L439.0 470.0 L440.0 470.0 L441.0 468.4" fill="none" stroke="#1dff1d" stroke-width="1.5" stroke-linejoin="round"/></svg><div class="t" style="left:548px;top:217px;">inbus</div><div class="pu" style="left:548px;top:226.5px;width:38.5px;height:14.6px;"><i></i><b>2, 3</b></div><div class="t" style="left:548px;top:252px;">FrqScl</div><div class="pu" style="left:548px;top:262px;width:38.5px;height:15.6px;"><i></i><b>lin</b></div><div class="t" style="left:548px;top:287px;">dbCut</div><div class="pu" style="left:548px;top:297px;width:38.5px;height:15.6px;"><i></i><b>96</b></div><div class="bt bg" style="left:549px;top:320.8px;width:38.4px;height:14.4px;"><b>Off</b></div></div><div class="win" style="left:1px;top:491px;width:399.5px;height:349px;"><div class="tb"></div><div class="tl " style="left:8px;top:4px"></div><div class="tl " style="left:29px;top:4px"></div><div class="tl " style="left:50px;top:4px"></div><div class="tt" style="left:199.5px;">wavescope</div><div class="a" style="left:7px;top:23px;width:386.5px;height:292.5px;background:#8d8d8d;border:1px solid #6a6a6a;border-right-color:#e8e8e8;border-bottom-color:#e8e8e8"></div><div class="a" style="left:9.5px;top:25.5px;width:380.5px;height:287.5px;background:#001500"></div><svg class="a" style="left:0;top:0" width="399" height="349" viewBox="1 491 399 349"><path d="M12.0 587.3 L13.0 587.1 L14.0 586.7 L15.0 588.4 L16.0 585.6 L17.0 588.2 L18.0 585.6 L19.0 587.3 L20.0 587.1 L21.0 585.5 L22.0 587.6 L23.0 586.2 L24.0 583.1 L25.0 585.7 L26.0 588.4 L27.0 588.3 L28.0 588.2 L29.0 586.0 L30.0 588.0 L31.0 588.2 L32.0 585.3 L33.0 587.8 L34.0 588.2 L35.0 585.9 L36.0 588.2 L37.0 587.2 L38.0 586.5 L39.0 585.3 L40.0 585.9 L41.0 585.3 L42.0 588.3 L43.0 587.5 L44.0 585.3 L45.0 586.4 L46.0 582.6 L47.0 586.8 L48.0 586.3 L49.0 584.7 L50.0 585.4 L51.0 583.2 L52.0 586.6 L53.0 588.1 L54.0 585.5 L55.0 587.0 L56.0 586.7 L57.0 585.9 L58.0 588.0 L59.0 585.5 L60.0 586.6 L61.0 588.2 L62.0 585.6 L63.0 587.3 L64.0 587.5 L65.0 586.6 L66.0 587.6 L67.0 584.9 L68.0 587.8 L69.0 585.6 L70.0 586.6 L71.0 586.0 L72.0 584.6 L73.0 585.1 L74.0 584.7 L75.0 586.7 L76.0 587.9 L77.0 586.1 L78.0 585.9 L79.0 588.4 L80.0 587.5 L81.0 586.2 L82.0 585.2 L83.0 588.0 L84.0 587.2 L85.0 585.2 L86.0 586.0 L87.0 587.8 L88.0 586.7 L89.0 585.7 L90.0 586.7 L91.0 585.9 L92.0 587.5 L93.0 586.9 L94.0 585.6 L95.0 587.9 L96.0 586.6 L97.0 587.7 L98.0 588.0 L99.0 586.9 L100.0 586.9 L101.0 587.5 L102.0 586.7 L103.0 585.9 L104.0 588.4 L105.0 587.4 L106.0 586.1 L107.0 588.2 L108.0 587.8 L109.0 588.4 L110.0 587.3 L111.0 587.3 L112.0 587.0 L113.0 586.5 L114.0 586.4 L115.0 588.2 L116.0 588.2 L117.0 586.6 L118.0 585.3 L119.0 587.0 L120.0 587.5 L121.0 588.4 L122.0 587.4 L123.0 588.4 L124.0 584.0 L125.0 587.7 L126.0 587.6 L127.0 587.1 L128.0 587.0 L129.0 587.6 L130.0 587.1 L131.0 587.4 L132.0 588.3 L133.0 586.9 L134.0 587.2 L135.0 587.1 L136.0 588.9 L137.0 588.3 L138.0 587.3 L139.0 586.4 L140.0 586.5 L141.0 585.8 L142.0 588.0 L143.0 587.6 L144.0 586.5 L145.0 585.0 L146.0 588.6 L147.0 587.5 L148.0 587.7 L149.0 587.4 L150.0 588.2 L151.0 588.6 L152.0 587.1 L153.0 588.8 L154.0 586.6 L155.0 587.2 L156.0 587.5 L157.0 588.5 L158.0 587.9 L159.0 587.6 L160.0 586.6 L161.0 588.7 L162.0 588.1 L163.0 587.6 L164.0 588.4 L165.0 588.9 L166.0 587.5 L167.0 588.8 L168.0 588.1 L169.0 587.2 L170.0 587.1 L171.0 588.0 L172.0 587.5 L173.0 587.2 L174.0 588.8 L175.0 587.7 L176.0 587.2 L177.0 588.8 L178.0 588.3 L179.0 588.2 L180.0 586.9 L181.0 587.1 L182.0 586.8 L183.0 588.2 L184.0 588.6 L185.0 587.1 L186.0 584.5 L187.0 587.8 L188.0 587.2 L189.0 588.8 L190.0 588.8 L191.0 587.5 L192.0 587.8 L193.0 586.8 L194.0 587.4 L195.0 587.2 L196.0 587.1 L197.0 587.9 L198.0 588.1 L199.0 588.2 L200.0 585.9 L201.0 588.8 L202.0 588.9 L203.0 589.0 L204.0 588.5 L205.0 588.6 L206.0 588.4 L207.0 588.5 L208.0 587.8 L209.0 588.9 L210.0 587.9 L211.0 585.1 L212.0 588.2 L213.0 588.7 L214.0 587.2 L215.0 588.5 L216.0 589.1 L217.0 588.9 L218.0 588.0 L219.0 587.2 L220.0 587.1 L221.0 587.9 L222.0 588.4 L223.0 588.1 L224.0 588.8 L225.0 584.8 L226.0 587.6 L227.0 589.1 L228.0 587.8 L229.0 588.4 L230.0 588.5 L231.0 587.1 L232.0 587.3 L233.0 587.7 L234.0 587.3 L235.0 588.8 L236.0 587.2 L237.0 587.5 L238.0 588.2 L239.0 587.0 L240.0 589.1 L241.0 588.9 L242.0 587.4 L243.0 587.2 L244.0 588.8 L245.0 587.6 L246.0 587.8 L247.0 587.9 L248.0 588.4 L249.0 588.8 L250.0 588.0 L251.0 587.4 L252.0 588.5 L253.0 587.4 L254.0 589.1 L255.0 587.8 L256.0 587.7 L257.0 588.1 L258.0 588.3 L259.0 588.5 L260.0 589.7 L261.0 588.4 L262.0 589.2 L263.0 587.6 L264.0 586.6 L265.0 585.5 L266.0 584.8 L267.0 584.9 L268.0 584.2 L269.0 585.5 L270.0 588.5 L271.0 590.2 L272.0 592.2 L273.0 594.4 L274.0 594.1 L275.0 592.6 L276.0 590.5 L277.0 586.6 L278.0 580.8 L279.0 579.8 L280.0 577.0 L281.0 578.6 L282.0 582.4 L283.0 586.7 L284.0 591.8 L285.0 595.7 L286.0 597.0 L287.0 598.1 L288.0 597.6 L289.0 593.1 L290.0 588.4 L291.0 585.2 L292.0 581.0 L293.0 577.6 L294.0 579.5 L295.0 581.0 L296.0 583.8 L297.0 588.3 L298.0 591.8 L299.0 594.9 L300.0 597.2 L301.0 597.6 L302.0 593.4 L303.0 591.3 L304.0 587.7 L305.0 584.4 L306.0 581.2 L307.0 579.8 L308.0 581.2 L309.0 582.6 L310.0 586.2 L311.0 590.1 L312.0 593.5 L313.0 595.8 L314.0 597.8 L315.0 595.0 L316.0 592.5 L317.0 590.4 L318.0 585.2 L319.0 581.6 L320.0 579.6 L321.0 580.3 L322.0 581.1 L323.0 584.9 L324.0 587.2 L325.0 591.3 L326.0 593.7 L327.0 596.2 L328.0 594.6 L329.0 594.7 L330.0 591.3 L331.0 588.2 L332.0 586.0 L333.0 581.2 L334.0 579.9 L335.0 579.6 L336.0 582.7 L337.0 585.7 L338.0 588.5 L339.0 591.5 L340.0 593.4 L341.0 594.1 L342.0 594.4 L343.0 592.7 L344.0 590.2 L345.0 586.9 L346.0 583.0 L347.0 582.1 L348.0 581.2 L349.0 582.1 L350.0 584.0 L351.0 586.6 L352.0 590.4 L353.0 592.7 L354.0 593.4 L355.0 594.7 L356.0 594.5 L357.0 591.0 L358.0 588.6 L359.0 586.4 L360.0 584.1 L361.0 582.3 L362.0 582.7 L363.0 582.7 L364.0 585.9 L365.0 588.9 L366.0 590.1 L367.0 592.2 L368.0 594.2 L369.0 594.4 L370.0 592.0 L371.0 589.6 L372.0 586.7 L373.0 584.6 L374.0 583.8 L375.0 582.8 L376.0 582.2 L377.0 583.8 L378.0 585.7 L379.0 588.9 L380.0 590.9 L381.0 592.9 L382.0 593.9 L383.0 593.9 L384.0 591.6 L385.0 589.7 L386.0 586.8 L387.0 585.1 L388.0 582.0 L389.0 581.7 L390.0 583.2 L390.0 587.3 L389.0 587.1 L388.0 586.7 L387.0 588.4 L386.0 590.5 L385.0 592.4 L384.0 595.2 L383.0 597.0 L382.0 596.8 L381.0 596.3 L380.0 595.5 L379.0 592.4 L378.0 589.5 L377.0 587.5 L376.0 585.8 L375.0 585.7 L374.0 586.9 L373.0 588.8 L372.0 591.4 L371.0 594.8 L370.0 597.6 L369.0 597.7 L368.0 597.3 L367.0 596.3 L366.0 594.4 L365.0 591.6 L364.0 589.8 L363.0 586.0 L362.0 585.4 L361.0 584.7 L360.0 587.0 L359.0 590.6 L358.0 591.6 L357.0 594.8 L356.0 598.8 L355.0 597.8 L354.0 598.6 L353.0 595.6 L352.0 593.7 L351.0 589.5 L350.0 589.1 L349.0 585.6 L348.0 584.0 L347.0 585.6 L346.0 587.0 L345.0 591.3 L344.0 595.2 L343.0 596.7 L342.0 598.5 L341.0 599.3 L340.0 598.0 L339.0 595.1 L338.0 592.5 L337.0 589.8 L336.0 586.1 L335.0 583.7 L334.0 583.5 L333.0 585.5 L332.0 589.1 L331.0 591.3 L330.0 595.0 L329.0 598.4 L328.0 598.6 L327.0 599.9 L326.0 597.6 L325.0 594.2 L324.0 591.9 L323.0 588.9 L322.0 584.5 L321.0 583.4 L320.0 583.7 L319.0 586.2 L318.0 589.4 L317.0 593.9 L316.0 597.6 L315.0 598.7 L314.0 601.7 L313.0 600.2 L312.0 597.6 L311.0 594.1 L310.0 589.7 L309.0 587.2 L308.0 584.2 L307.0 583.9 L306.0 584.2 L305.0 587.2 L304.0 590.8 L303.0 594.4 L302.0 598.2 L301.0 601.4 L300.0 601.7 L299.0 599.9 L298.0 596.2 L297.0 591.1 L296.0 587.8 L295.0 584.0 L294.0 583.1 L293.0 583.2 L292.0 584.7 L291.0 589.4 L290.0 592.8 L289.0 596.4 L288.0 601.7 L287.0 602.5 L286.0 601.9 L285.0 599.3 L284.0 594.0 L283.0 590.2 L282.0 586.3 L281.0 581.7 L280.0 582.0 L279.0 583.6 L278.0 585.4 L277.0 591.1 L276.0 595.8 L275.0 595.3 L274.0 597.2 L273.0 597.9 L272.0 596.1 L271.0 593.5 L270.0 593.2 L269.0 590.7 L268.0 588.6 L267.0 589.0 L266.0 588.8 L265.0 590.9 L264.0 591.1 L263.0 592.3 L262.0 593.4 L261.0 592.1 L260.0 593.7 L259.0 592.1 L258.0 592.2 L257.0 591.5 L256.0 592.5 L255.0 591.5 L254.0 591.2 L253.0 591.3 L252.0 592.7 L251.0 592.1 L250.0 591.4 L249.0 592.7 L248.0 591.8 L247.0 592.3 L246.0 591.3 L245.0 592.6 L244.0 592.4 L243.0 592.0 L242.0 592.2 L241.0 591.7 L240.0 591.6 L239.0 592.6 L238.0 590.9 L237.0 592.6 L236.0 591.8 L235.0 591.2 L234.0 592.2 L233.0 592.4 L232.0 591.1 L231.0 592.1 L230.0 591.3 L229.0 591.6 L228.0 591.5 L227.0 593.0 L226.0 591.4 L225.0 592.3 L224.0 591.8 L223.0 592.5 L222.0 591.6 L221.0 592.1 L220.0 591.1 L219.0 591.6 L218.0 592.0 L217.0 591.5 L216.0 592.7 L215.0 592.1 L214.0 592.1 L213.0 591.3 L212.0 592.7 L211.0 591.5 L210.0 592.1 L209.0 593.0 L208.0 593.1 L207.0 592.9 L206.0 592.2 L205.0 591.6 L204.0 592.6 L203.0 591.2 L202.0 592.0 L201.0 592.4 L200.0 593.1 L199.0 591.3 L198.0 591.3 L197.0 592.6 L196.0 593.0 L195.0 592.5 L194.0 592.6 L193.0 592.5 L192.0 592.7 L191.0 591.5 L190.0 592.4 L189.0 591.2 L188.0 591.1 L187.0 592.3 L186.0 591.6 L185.0 592.3 L184.0 592.3 L183.0 591.8 L182.0 593.1 L181.0 591.7 L180.0 593.2 L179.0 591.3 L178.0 591.3 L177.0 591.7 L176.0 591.2 L175.0 592.1 L174.0 593.1 L173.0 593.2 L172.0 593.3 L171.0 591.6 L170.0 592.5 L169.0 593.0 L168.0 592.1 L167.0 592.6 L166.0 591.3 L165.0 591.2 L164.0 593.4 L163.0 592.5 L162.0 591.7 L161.0 593.2 L160.0 593.3 L159.0 592.0 L158.0 592.6 L157.0 591.2 L156.0 591.3 L155.0 592.2 L154.0 591.6 L153.0 593.2 L152.0 591.2 L151.0 592.9 L150.0 593.6 L149.0 592.4 L148.0 592.5 L147.0 591.2 L146.0 592.2 L145.0 592.9 L144.0 592.6 L143.0 592.3 L142.0 591.3 L141.0 592.1 L140.0 591.1 L139.0 592.7 L138.0 592.5 L137.0 593.4 L136.0 592.0 L135.0 591.3 L134.0 593.0 L133.0 592.1 L132.0 593.4 L131.0 592.4 L130.0 593.3 L129.0 591.1 L128.0 592.1 L127.0 593.3 L126.0 594.7 L125.0 593.1 L124.0 591.4 L123.0 591.7 L122.0 592.5 L121.0 593.8 L120.0 593.1 L119.0 593.6 L118.0 593.0 L117.0 592.3 L116.0 593.1 L115.0 593.9 L114.0 592.0 L113.0 591.8 L112.0 592.7 L111.0 591.6 L110.0 592.4 L109.0 592.7 L108.0 593.0 L107.0 591.9 L106.0 594.1 L105.0 592.2 L104.0 592.5 L103.0 594.0 L102.0 591.5 L101.0 593.7 L100.0 591.4 L99.0 591.9 L98.0 594.0 L97.0 592.5 L96.0 593.0 L95.0 593.0 L94.0 593.0 L93.0 593.7 L92.0 594.0 L91.0 591.6 L90.0 596.5 L89.0 592.6 L88.0 594.1 L87.0 594.6 L86.0 594.3 L85.0 593.1 L84.0 593.5 L83.0 593.1 L82.0 591.8 L81.0 594.3 L80.0 592.8 L79.0 593.3 L78.0 592.3 L77.0 594.0 L76.0 591.8 L75.0 591.7 L74.0 594.6 L73.0 591.8 L72.0 595.9 L71.0 593.5 L70.0 592.7 L69.0 595.3 L68.0 593.6 L67.0 593.1 L66.0 593.3 L65.0 595.1 L64.0 592.3 L63.0 591.7 L62.0 593.6 L61.0 594.0 L60.0 594.9 L59.0 593.2 L58.0 594.1 L57.0 593.1 L56.0 594.7 L55.0 594.3 L54.0 594.3 L53.0 593.7 L52.0 594.4 L51.0 595.2 L50.0 591.7 L49.0 594.1 L48.0 592.1 L47.0 591.8 L46.0 592.3 L45.0 594.7 L44.0 594.2 L43.0 594.5 L42.0 595.0 L41.0 593.7 L40.0 594.8 L39.0 594.4 L38.0 594.5 L37.0 593.1 L36.0 593.5 L35.0 592.6 L34.0 594.8 L33.0 592.8 L32.0 594.1 L31.0 592.8 L30.0 593.8 L29.0 592.0 L28.0 594.7 L27.0 592.5 L26.0 593.4 L25.0 592.9 L24.0 594.1 L23.0 592.6 L22.0 592.1 L21.0 594.5 L20.0 593.4 L19.0 594.0 L18.0 592.1 L17.0 593.9 L16.0 594.3 L15.0 596.3 L14.0 593.8 L13.0 593.1 L12.0 593.0ZM12.0 730.2 L13.0 731.6 L14.0 729.5 L15.0 731.2 L16.0 731.5 L17.0 730.6 L18.0 731.5 L19.0 728.6 L20.0 731.2 L21.0 729.4 L22.0 730.4 L23.0 730.4 L24.0 728.5 L25.0 729.4 L26.0 730.4 L27.0 731.5 L28.0 730.9 L29.0 731.3 L30.0 731.5 L31.0 731.4 L32.0 730.0 L33.0 731.0 L34.0 726.5 L35.0 728.9 L36.0 731.4 L37.0 729.8 L38.0 728.6 L39.0 729.8 L40.0 728.3 L41.0 730.5 L42.0 728.9 L43.0 729.0 L44.0 729.9 L45.0 729.4 L46.0 728.6 L47.0 728.5 L48.0 726.2 L49.0 728.0 L50.0 729.4 L51.0 730.1 L52.0 729.3 L53.0 728.7 L54.0 730.1 L55.0 730.2 L56.0 725.3 L57.0 729.6 L58.0 730.4 L59.0 729.9 L60.0 730.5 L61.0 730.7 L62.0 730.4 L63.0 730.5 L64.0 728.7 L65.0 728.7 L66.0 729.4 L67.0 730.5 L68.0 728.2 L69.0 729.9 L70.0 730.9 L71.0 728.4 L72.0 729.8 L73.0 728.3 L74.0 725.2 L75.0 728.1 L76.0 730.3 L77.0 728.1 L78.0 731.4 L79.0 730.3 L80.0 728.3 L81.0 729.5 L82.0 728.6 L83.0 729.2 L84.0 729.0 L85.0 728.5 L86.0 730.0 L87.0 726.2 L88.0 728.8 L89.0 731.2 L90.0 728.4 L91.0 730.8 L92.0 729.1 L93.0 730.8 L94.0 728.5 L95.0 730.7 L96.0 731.6 L97.0 729.1 L98.0 729.0 L99.0 729.8 L100.0 730.5 L101.0 728.8 L102.0 731.4 L103.0 730.1 L104.0 730.8 L105.0 730.3 L106.0 731.2 L107.0 729.1 L108.0 730.7 L109.0 729.9 L110.0 729.0 L111.0 731.0 L112.0 730.0 L113.0 729.2 L114.0 730.6 L115.0 731.2 L116.0 730.1 L117.0 731.0 L118.0 730.8 L119.0 729.6 L120.0 728.3 L121.0 731.1 L122.0 730.9 L123.0 731.5 L124.0 729.5 L125.0 729.5 L126.0 731.2 L127.0 730.3 L128.0 727.7 L129.0 731.0 L130.0 730.6 L131.0 730.5 L132.0 729.6 L133.0 730.3 L134.0 729.9 L135.0 730.2 L136.0 731.2 L137.0 729.5 L138.0 729.5 L139.0 729.8 L140.0 730.3 L141.0 730.1 L142.0 730.1 L143.0 730.4 L144.0 730.9 L145.0 730.6 L146.0 729.8 L147.0 731.2 L148.0 731.5 L149.0 731.5 L150.0 729.5 L151.0 731.2 L152.0 730.4 L153.0 731.8 L154.0 729.7 L155.0 730.1 L156.0 730.3 L157.0 730.9 L158.0 731.5 L159.0 730.3 L160.0 731.5 L161.0 730.4 L162.0 731.2 L163.0 730.2 L164.0 731.8 L165.0 730.7 L166.0 729.8 L167.0 731.4 L168.0 731.6 L169.0 727.9 L170.0 731.7 L171.0 731.6 L172.0 730.3 L173.0 731.0 L174.0 731.8 L175.0 729.9 L176.0 731.6 L177.0 731.4 L178.0 731.6 L179.0 731.0 L180.0 729.9 L181.0 730.4 L182.0 730.9 L183.0 731.5 L184.0 729.9 L185.0 730.4 L186.0 731.0 L187.0 731.3 L188.0 730.0 L189.0 730.4 L190.0 731.7 L191.0 731.0 L192.0 731.8 L193.0 731.7 L194.0 730.2 L195.0 729.8 L196.0 730.2 L197.0 729.9 L198.0 730.3 L199.0 731.6 L200.0 731.7 L201.0 731.0 L202.0 730.5 L203.0 731.1 L204.0 729.9 L205.0 730.1 L206.0 730.6 L207.0 730.8 L208.0 730.0 L209.0 731.5 L210.0 731.9 L211.0 731.7 L212.0 731.6 L213.0 731.7 L214.0 731.0 L215.0 732.0 L216.0 730.3 L217.0 731.1 L218.0 730.6 L219.0 730.2 L220.0 729.1 L221.0 731.8 L222.0 731.1 L223.0 731.9 L224.0 730.7 L225.0 731.6 L226.0 731.0 L227.0 730.4 L228.0 730.9 L229.0 731.8 L230.0 730.7 L231.0 731.1 L232.0 732.1 L233.0 730.4 L234.0 731.0 L235.0 732.1 L236.0 730.8 L237.0 730.5 L238.0 730.3 L239.0 731.3 L240.0 731.9 L241.0 731.3 L242.0 730.5 L243.0 731.8 L244.0 730.6 L245.0 731.6 L246.0 730.9 L247.0 730.9 L248.0 730.7 L249.0 730.3 L250.0 730.4 L251.0 731.5 L252.0 731.8 L253.0 730.6 L254.0 731.0 L255.0 731.9 L256.0 731.1 L257.0 731.8 L258.0 732.0 L259.0 731.7 L260.0 732.6 L261.0 732.2 L262.0 732.5 L263.0 731.2 L264.0 729.1 L265.0 729.1 L266.0 728.2 L267.0 728.1 L268.0 728.8 L269.0 729.5 L270.0 732.0 L271.0 734.1 L272.0 735.8 L273.0 737.3 L274.0 736.4 L275.0 734.1 L276.0 733.2 L277.0 729.2 L278.0 724.8 L279.0 722.0 L280.0 720.5 L281.0 721.9 L282.0 726.0 L283.0 729.8 L284.0 732.5 L285.0 738.1 L286.0 739.9 L287.0 739.7 L288.0 739.1 L289.0 735.9 L290.0 733.5 L291.0 727.5 L292.0 724.1 L293.0 721.4 L294.0 722.4 L295.0 723.8 L296.0 725.6 L297.0 731.1 L298.0 734.2 L299.0 738.2 L300.0 739.2 L301.0 739.9 L302.0 738.8 L303.0 733.8 L304.0 729.4 L305.0 724.8 L306.0 722.8 L307.0 721.5 L308.0 723.2 L309.0 724.7 L310.0 728.7 L311.0 731.4 L312.0 735.6 L313.0 738.9 L314.0 739.0 L315.0 737.9 L316.0 735.3 L317.0 733.4 L318.0 729.1 L319.0 724.2 L320.0 723.6 L321.0 722.0 L322.0 723.2 L323.0 726.3 L324.0 731.2 L325.0 734.6 L326.0 735.5 L327.0 739.1 L328.0 739.7 L329.0 736.7 L330.0 734.2 L331.0 730.5 L332.0 728.4 L333.0 724.1 L334.0 724.7 L335.0 723.3 L336.0 725.2 L337.0 727.1 L338.0 732.3 L339.0 736.2 L340.0 736.8 L341.0 738.4 L342.0 738.6 L343.0 736.9 L344.0 732.6 L345.0 729.0 L346.0 727.5 L347.0 724.8 L348.0 724.4 L349.0 724.3 L350.0 726.3 L351.0 730.3 L352.0 733.2 L353.0 735.6 L354.0 736.5 L355.0 737.6 L356.0 737.4 L357.0 734.0 L358.0 731.9 L359.0 729.1 L360.0 725.6 L361.0 723.8 L362.0 724.7 L363.0 725.8 L364.0 727.4 L365.0 730.1 L366.0 734.2 L367.0 735.7 L368.0 737.2 L369.0 737.0 L370.0 735.3 L371.0 733.8 L372.0 730.6 L373.0 727.8 L374.0 725.7 L375.0 724.1 L376.0 725.2 L377.0 727.5 L378.0 730.4 L379.0 731.8 L380.0 735.4 L381.0 735.7 L382.0 736.0 L383.0 735.6 L384.0 734.7 L385.0 731.3 L386.0 729.8 L387.0 727.2 L388.0 725.2 L389.0 725.5 L390.0 725.5 L390.0 730.2 L389.0 729.8 L388.0 730.0 L387.0 731.0 L386.0 734.2 L385.0 735.7 L384.0 737.9 L383.0 740.3 L382.0 739.8 L381.0 739.6 L380.0 738.1 L379.0 735.5 L378.0 733.7 L377.0 731.5 L376.0 730.5 L375.0 729.4 L374.0 730.4 L373.0 732.0 L372.0 733.5 L371.0 736.6 L370.0 739.5 L369.0 740.3 L368.0 741.5 L367.0 740.5 L366.0 737.8 L365.0 735.2 L364.0 731.5 L363.0 729.5 L362.0 727.8 L361.0 728.1 L360.0 729.4 L359.0 732.5 L358.0 735.9 L357.0 739.2 L356.0 741.3 L355.0 741.8 L354.0 741.2 L353.0 740.0 L352.0 737.0 L351.0 734.3 L350.0 731.4 L349.0 728.7 L348.0 727.7 L347.0 729.5 L346.0 729.8 L345.0 733.4 L344.0 736.9 L343.0 739.7 L342.0 741.6 L341.0 742.0 L340.0 740.8 L339.0 740.0 L338.0 735.8 L337.0 731.4 L336.0 728.9 L335.0 727.8 L334.0 728.8 L333.0 727.8 L332.0 731.6 L331.0 734.2 L330.0 737.1 L329.0 740.1 L328.0 742.1 L327.0 743.9 L326.0 740.4 L325.0 738.5 L324.0 735.3 L323.0 731.2 L322.0 728.4 L321.0 725.9 L320.0 727.2 L319.0 728.4 L318.0 732.4 L317.0 737.3 L316.0 740.4 L315.0 742.4 L314.0 743.8 L313.0 743.4 L312.0 740.9 L311.0 736.0 L310.0 732.7 L309.0 729.6 L308.0 726.9 L307.0 725.5 L306.0 727.4 L305.0 728.8 L304.0 734.1 L303.0 737.3 L302.0 741.9 L301.0 743.1 L300.0 744.6 L299.0 742.7 L298.0 740.1 L297.0 736.0 L296.0 730.7 L295.0 728.3 L294.0 725.4 L293.0 725.4 L292.0 728.1 L291.0 731.2 L290.0 736.4 L289.0 739.5 L288.0 744.6 L287.0 745.3 L286.0 745.0 L285.0 741.3 L284.0 736.7 L283.0 733.3 L282.0 729.8 L281.0 726.6 L280.0 724.8 L279.0 726.5 L278.0 727.7 L277.0 733.3 L276.0 737.3 L275.0 738.7 L274.0 740.8 L273.0 740.0 L272.0 739.3 L271.0 738.0 L270.0 736.8 L269.0 733.1 L268.0 732.1 L267.0 732.4 L266.0 731.1 L265.0 733.4 L264.0 733.9 L263.0 735.0 L262.0 736.1 L261.0 736.5 L260.0 737.0 L259.0 735.5 L258.0 736.3 L257.0 736.0 L256.0 735.9 L255.0 734.8 L254.0 735.4 L253.0 736.8 L252.0 735.7 L251.0 735.7 L250.0 735.1 L249.0 735.4 L248.0 735.2 L247.0 735.9 L246.0 734.1 L245.0 735.5 L244.0 735.9 L243.0 735.6 L242.0 735.3 L241.0 735.8 L240.0 734.8 L239.0 735.1 L238.0 735.2 L237.0 734.3 L236.0 734.9 L235.0 735.9 L234.0 735.3 L233.0 734.1 L232.0 734.4 L231.0 734.2 L230.0 734.0 L229.0 734.7 L228.0 734.8 L227.0 735.3 L226.0 734.9 L225.0 734.4 L224.0 734.5 L223.0 736.0 L222.0 735.7 L221.0 737.3 L220.0 735.9 L219.0 735.1 L218.0 733.9 L217.0 735.3 L216.0 734.5 L215.0 736.0 L214.0 735.4 L213.0 735.4 L212.0 735.3 L211.0 735.2 L210.0 734.3 L209.0 735.0 L208.0 735.7 L207.0 734.8 L206.0 735.0 L205.0 736.1 L204.0 738.0 L203.0 736.6 L202.0 736.1 L201.0 734.1 L200.0 737.5 L199.0 735.1 L198.0 734.8 L197.0 735.4 L196.0 735.2 L195.0 735.5 L194.0 735.6 L193.0 736.1 L192.0 737.4 L191.0 734.8 L190.0 737.9 L189.0 736.9 L188.0 734.7 L187.0 737.2 L186.0 735.6 L185.0 734.2 L184.0 734.9 L183.0 736.1 L182.0 736.5 L181.0 736.0 L180.0 736.3 L179.0 736.3 L178.0 735.4 L177.0 735.7 L176.0 734.2 L175.0 734.1 L174.0 734.4 L173.0 736.2 L172.0 734.3 L171.0 736.7 L170.0 734.5 L169.0 735.0 L168.0 734.7 L167.0 736.1 L166.0 734.4 L165.0 734.4 L164.0 736.3 L163.0 735.2 L162.0 735.4 L161.0 734.4 L160.0 736.3 L159.0 735.3 L158.0 735.5 L157.0 734.4 L156.0 735.5 L155.0 735.7 L154.0 735.3 L153.0 734.3 L152.0 735.2 L151.0 734.2 L150.0 735.9 L149.0 735.1 L148.0 736.8 L147.0 736.3 L146.0 737.3 L145.0 736.5 L144.0 734.9 L143.0 734.9 L142.0 737.6 L141.0 736.1 L140.0 734.8 L139.0 736.5 L138.0 735.4 L137.0 734.4 L136.0 736.8 L135.0 736.3 L134.0 736.0 L133.0 736.6 L132.0 734.1 L131.0 735.5 L130.0 735.5 L129.0 735.1 L128.0 735.2 L127.0 734.6 L126.0 735.5 L125.0 736.1 L124.0 735.5 L123.0 734.7 L122.0 735.4 L121.0 734.5 L120.0 734.3 L119.0 735.3 L118.0 736.7 L117.0 734.2 L116.0 735.8 L115.0 735.6 L114.0 735.2 L113.0 735.4 L112.0 735.9 L111.0 736.5 L110.0 736.1 L109.0 734.5 L108.0 735.7 L107.0 735.1 L106.0 735.2 L105.0 735.6 L104.0 735.3 L103.0 736.0 L102.0 736.5 L101.0 736.5 L100.0 736.2 L99.0 736.0 L98.0 737.4 L97.0 736.7 L96.0 735.1 L95.0 737.3 L94.0 736.8 L93.0 734.7 L92.0 735.8 L91.0 737.5 L90.0 739.4 L89.0 736.8 L88.0 734.6 L87.0 734.9 L86.0 735.9 L85.0 736.9 L84.0 735.5 L83.0 735.9 L82.0 736.3 L81.0 736.2 L80.0 736.8 L79.0 735.3 L78.0 735.2 L77.0 737.9 L76.0 735.1 L75.0 737.7 L74.0 736.6 L73.0 735.3 L72.0 736.1 L71.0 736.2 L70.0 737.1 L69.0 738.0 L68.0 735.8 L67.0 739.3 L66.0 736.1 L65.0 736.0 L64.0 737.2 L63.0 736.8 L62.0 736.5 L61.0 736.5 L60.0 738.2 L59.0 735.7 L58.0 738.4 L57.0 735.3 L56.0 736.1 L55.0 737.3 L54.0 737.3 L53.0 736.1 L52.0 737.0 L51.0 735.8 L50.0 737.6 L49.0 737.6 L48.0 736.7 L47.0 736.7 L46.0 736.1 L45.0 736.8 L44.0 735.4 L43.0 737.0 L42.0 735.3 L41.0 737.9 L40.0 735.1 L39.0 736.7 L38.0 736.7 L37.0 734.6 L36.0 736.6 L35.0 738.1 L34.0 737.5 L33.0 737.6 L32.0 737.6 L31.0 736.0 L30.0 735.3 L29.0 736.2 L28.0 735.8 L27.0 737.1 L26.0 736.0 L25.0 736.5 L24.0 736.5 L23.0 734.5 L22.0 735.7 L21.0 734.5 L20.0 735.3 L19.0 737.3 L18.0 737.2 L17.0 738.1 L16.0 736.9 L15.0 735.7 L14.0 736.2 L13.0 735.5 L12.0 736.3Z" fill="#1dff1d" stroke="#1dff1d" stroke-width=".4"/></svg><div class="t" style="left:10px;top:327px;">inbus :</div><div class="pu" style="left:44px;top:318px;width:39.5px;height:17.6px;"><i></i><b>2</b></div><div class="t" style="left:88px;top:327px;">chNum :</div><div class="pu" style="left:132px;top:318px;width:39.5px;height:17.6px;"><i></i><b>2</b></div><div class="bt bg" style="left:176px;top:319px;width:39.9px;height:14.9px;"><b>Off</b></div><div class="t" style="left:254px;top:327px;">use arrows to zoom</div></div><div class="win" style="left:400.5px;top:584px;width:520px;height:264px;"><div class="tb"></div><div class="tl " style="left:2.5px;top:4px"></div><div class="tl " style="left:23.5px;top:4px"></div><div class="tl " style="left:44.5px;top:4px"></div><div class="tt" style="left:254.5px;">Equalizer</div><div class="a" style="left:4.5px;top:27px;width:510px;height:201px;background:#fff;border-top:1px solid #8a8a8a;border-left:1px solid #8a8a8a"></div><svg class="a" style="left:0;top:0" width="520" height="264" viewBox="400.5 584 520 264"><defs><linearGradient id="hg" x1="0" y1="0" x2="0" y2="1"><stop offset="0" stop-color="#58ad58"/><stop offset=".5" stop-color="#c4f0c4"/><stop offset="1" stop-color="#58ad58"/></linearGradient></defs><path d="M410.7 612V812M426.7 612V812M442.7 612V812M458.7 612V812M474.7 612V812M490.7 612V812M506.7 612V812M522.7 612V812M538.7 612V812M554.7 612V812M570.7 612V812M586.7 612V812M602.7 612V812M618.7 612V812M634.7 612V812M650.7 612V812M666.7 612V812M682.7 612V812M698.7 612V812M714.7 612V812M730.7 612V812M746.7 612V812M762.7 612V812M778.7 612V812M794.7 612V812M810.7 612V812M826.7 612V812M842.7 612V812M858.7 612V812M874.7 612V812M890.7 612V812M906.7 612V812M406 710.8H915" stroke="#b9d9b9" stroke-width="1.4" fill="none"/><rect x="405.3" y="708.3" width="10.6" height="5.4" rx="1.8" fill="url(#hg)" stroke="#143a14" stroke-width="1.3"/><rect x="421.3" y="708.3" width="10.6" height="5.4" rx="1.8" fill="url(#hg)" stroke="#143a14" stroke-width="1.3"/><rect x="437.3" y="752.3" width="10.6" height="5.4" rx="1.8" fill="url(#hg)" stroke="#143a14" stroke-width="1.3"/><rect x="453.3" y="748.3" width="10.6" height="5.4" rx="1.8" fill="url(#hg)" stroke="#143a14" stroke-width="1.3"/><rect x="469.3" y="737.3" width="10.6" height="5.4" rx="1.8" fill="url(#hg)" stroke="#143a14" stroke-width="1.3"/><rect x="485.3" y="728.3" width="10.6" height="5.4" rx="1.8" fill="url(#hg)" stroke="#143a14" stroke-width="1.3"/><rect x="501.3" y="719.3" width="10.6" height="5.4" rx="1.8" fill="url(#hg)" stroke="#143a14" stroke-width="1.3"/><rect x="517.3" y="713.3" width="10.6" height="5.4" rx="1.8" fill="url(#hg)" stroke="#143a14" stroke-width="1.3"/><rect x="533.3" y="707.3" width="10.6" height="5.4" rx="1.8" fill="url(#hg)" stroke="#143a14" stroke-width="1.3"/><rect x="549.3" y="703.3" width="10.6" height="5.4" rx="1.8" fill="url(#hg)" stroke="#143a14" stroke-width="1.3"/><rect x="565.3" y="699.3" width="10.6" height="5.4" rx="1.8" fill="url(#hg)" stroke="#143a14" stroke-width="1.3"/><rect x="581.3" y="697.3" width="10.6" height="5.4" rx="1.8" fill="url(#hg)" stroke="#143a14" stroke-width="1.3"/><rect x="597.3" y="696.3" width="10.6" height="5.4" rx="1.8" fill="url(#hg)" stroke="#143a14" stroke-width="1.3"/></svg><div class="a" style="left:185.5px;top:227px;width:14px;height:10.5px;background:#a8a8a8"></div><div class="a" style="left:185.5px;top:237.5px;width:14px;height:14.5px;background:#cfcfcf"></div><div class="a" style="left:185.5px;top:252px;width:14px;height:12px;background:#a8a8a8"></div></div><div class="win" style="left:317.5px;top:782px;width:274.5px;height:234px;"><div class="tb"></div><div class="tl " style="left:7.5px;top:4px"></div><div class="tl " style="left:28.5px;top:4px"></div><div class="tl " style="left:49.5px;top:4px"></div><div class="tt" style="left:136.5px;">quarks</div><div class="ls"><div class="a" style="left:9.5px;top:32px;width:120.5px;height:95.5px;background:#c5d1c5;border-top:1px solid #7f8f7f;border-left:1px solid #7f8f7f;border-right:1px solid #eef4ee;border-bottom:1px solid #eef4ee"></div><div class="a" style="left:13.5px;top:34px;width:98px;height:17.5px;background:#679467"></div><div class="t" style="left:14.0px;top:42px;">utilities</div><div class="t" style="left:14.0px;top:60px;">instruments</div><div class="t" style="left:14.0px;top:78px;">effects</div><div class="t" style="left:14.0px;top:96px;">filters</div><div class="t" style="left:14.0px;top:114px;">spectral</div><div class="a" style="left:114.0px;top:33px;width:1.0px;height:93.5px;background:#8a9a8a"></div><div class="a" style="left:116.0px;top:34.5px;width:11.0px;height:80.0px;background:#c5d1c5;border-style:solid;border-width:1px 2px 2px 1px;border-color:#eef4ee #657565 #657565 #eef4ee"></div><div class="a" style="left:136.5px;top:29px;width:126px;height:158px;background:#c5d1c5;border:2px solid #6f6f6f"></div><div class="a" style="left:139.0px;top:31.5px;width:121.0px;height:153.0px;border-top:1px solid #7f8f7f;border-left:1px solid #7f8f7f;border-right:1px solid #eef4ee;border-bottom:1px solid #eef4ee"></div><div class="a" style="left:143.5px;top:160px;width:98px;height:17.5px;background:#679467"></div><div class="t" style="left:144.0px;top:42px;">AudioIn</div><div class="t" style="left:144.0px;top:60px;">Recorder</div><div class="t" style="left:144.0px;top:78px;">Player</div><div class="t" style="left:144.0px;top:96px;">BufferPool</div><div class="t" style="left:144.0px;top:114px;">PoolManager</div><div class="t" style="left:144.0px;top:132px;">FreqScope</div><div class="t" style="left:144.0px;top:150px;">WaveScope</div><div class="t" style="left:144.0px;top:168px;">EQMeter</div><div class="a" style="left:140.5px;top:178px;width:102px;height:6px;overflow:hidden"><div class="t" style="left:3.5px;top:8px">MixerNode</div></div><div class="a" style="left:243.5px;top:32.5px;width:1px;height:151.5px;background:#8a9a8a"></div><div class="a" style="left:245.5px;top:34.5px;width:11.5px;height:103.5px;background:#c5d1c5;border-style:solid;border-width:1px 2px 2px 1px;border-color:#eef4ee #657565 #657565 #eef4ee"></div></div><div class="pu" style="left:9.5px;top:138px;width:77.5px;height:16.1px;"><i></i></div><div class="tf" style="left:9.5px;top:161px;width:78px;height:14.5px;"><b>preset_1</b></div><div class="bt" style="left:94.5px;top:138.5px;width:34.9px;height:15.9px;"><b>load</b></div><div class="bt" style="left:94.5px;top:160.5px;width:34.9px;height:15.9px;"><b>store</b></div><div class="bt" style="left:94.5px;top:182.5px;width:34.9px;height:15.9px;"><b>delete</b></div><div class="bt" style="left:94.5px;top:204.5px;width:34.9px;height:15.9px;"><b>clear</b></div><svg class="a" style="left:28.5px;top:190px" width="46" height="32" viewBox="346 972 46 32"><path d="M348.1 978.3 L351.4 975.1 H361.5 L367.4 982.5 L373.7 975.1 H384.2 L387.1 978.1 V995.9 L383.4 999.6 H372.4 L367.4 992.4 L362.4 999.6 H351.4 L348.1 996.3 Z" fill="none" stroke="#f08a45" stroke-width="1.75" stroke-linejoin="miter"/><path d="M355.9 975.1 V995.6 L362.1 987.8 L355.9 982.7 M379.2 999.6 V979.7 L373.1 987.5 L379.2 993" fill="none" stroke="#f08a45" stroke-width="1.75" stroke-linejoin="miter" stroke-miterlimit="1.5"/></svg><div class="cb cbg" style="left:139.5px;top:194.5px;width:12px;height:11.5px;"></div><div class="t" style="left:156.5px;top:202px;">stereo</div><div class="cb" style="left:139.5px;top:212px;width:12px;height:11.5px;"></div><div class="t" style="left:156.5px;top:220px;">mono</div><div class="bt" style="left:194.5px;top:201px;width:12.9px;height:16.4px;"><b>f</b></div><div class="bt" style="left:210.0px;top:201px;width:49.4px;height:16.4px;"><b>Open</b></div></div><div class="win" style="left:598px;top:657px;width:790px;height:380px;"><div class="tb"></div><div class="tl " style="left:8px;top:4px"></div><div class="tl " style="left:29px;top:4px"></div><div class="tl " style="left:50px;top:4px"></div><div class="tt" style="left:395.0px;"></div><div class="pu" style="left:10px;top:32px;width:99.5px;height:16.1px;"><i></i><b>stratosamples</b></div><div class="pu" style="left:10px;top:54px;width:99.5px;height:16.1px;"><i></i><b>strato1_0.aif</b></div><div class="pu" style="left:10px;top:76px;width:99.5px;height:16.1px;"><i></i><b>warp</b></div><div class="pu" style="left:10px;top:98px;width:99.5px;height:16.1px;"><i></i><b>grain states</b></div><div class="bt" style="left:10px;top:120px;width:56.9px;height:15.9px;"><b>scramble</b></div><div class="bt" style="left:70px;top:120px;width:36.9px;height:15.9px;"><b>save</b></div><div class="cb cbg" style="left:15px;top:142px;width:12px;height:12px;"></div><div class="t" style="left:32px;top:150px;">draw</div><div class="bt" style="left:70px;top:140px;width:36.9px;height:15.9px;"><b>clear</b></div><div class="sl" style="left:10px;top:172px;width:99.5px;height:7.5px;"><div class="kn" style="left:5px"></div></div><div class="t" style="left:10px;top:190px;">- grain duration</div><div class="t" style="left:90px;top:190px;">0.05</div><div class="sl" style="left:10px;top:201.5px;width:99.5px;height:8.0px;"><div class="kn" style="left:16.5px"></div></div><div class="t" style="left:10px;top:220px;">- grain density</div><div class="t" style="left:90px;top:220px;">10</div><div class="t" style="left:11px;top:241px;">env:</div><div class="cb cbg" style="left:35px;top:233.5px;width:12px;height:11.5px;"></div><div class="t" style="left:52px;top:241px;">sine</div><div class="cb" style="left:75px;top:233.5px;width:12px;height:11.5px;"></div><div class="t" style="left:92px;top:241px;">perc</div><div class="bt" style="left:10px;top:257px;width:99.9px;height:15.9px;"><b>prepare recording</b></div><div class="cb" style="left:10px;top:285px;width:12px;height:11.5px;"></div><div class="t" style="left:27px;top:293px;">wacom</div><div class="cb cbg" style="left:66px;top:285px;width:12px;height:11.5px;"></div><div class="t" style="left:83px;top:293px;">mouse</div><div class="sl" style="left:10px;top:310px;width:99.5px;height:7.5px;"><div class="kn" style="left:86px"></div></div><div class="t" style="left:10px;top:327px;">- global vol</div><div class="t" style="left:90px;top:327px;">1</div><div class="t" style="left:13px;top:347px;">outbus :</div><div class="pu" style="left:60px;top:340px;width:49.5px;height:16.1px;"><i></i><b>0, 1</b></div><div class="a" style="left:120px;top:27px;width:662px;height:329px;background:#9bcd9b;border-top:1px solid #3f5f3f;border-left:1px solid #3f5f3f"></div><svg class="a" style="left:0;top:0" width="790" height="380" viewBox="598 657 790 380"><path d="M719.5 820.9V904.8M720.5 806.9V880.6M721.5 793.1V893.3M722.5 820.4V869.3M723.5 806.2V871.5M724.5 841.7V858.3M725.5 792.1V897.4M726.5 808.8V868.2M727.5 814.6V870.8M728.5 820.5V871.6M729.5 830.1V898.8M730.5 815.8V876.9M731.5 829.2V865.8M732.5 843.5V861.9M733.5 805.4V892.2M734.5 813.1V881.3M735.5 833.4V877.2M736.5 831.6V889.5M737.5 826.2V872.6M738.5 827.5V889.3M739.5 837.8V864.0M740.5 812.9V874.1M741.5 842.5V859.0M742.5 824.4V874.3M743.5 835.4V864.4M744.5 818.3V868.1M745.5 845.0V853.6M746.5 822.5V876.7M747.5 826.0V873.8" stroke="#6a986c" stroke-width="1.05" fill="none"/><path d="M747.0 879.4 L748.1 820.8 L749.7 869.6 L751.2 833.2 L752.3 861.5 L753.8 840.6 L754.7 871.2 L756.1 835.3 L757.5 856.7 L758.6 839.4 L759.7 858.3 L760.5 839.1 L762.1 870.6 L763.5 837.7 L764.5 869.1 L765.7 834.7 L766.5 857.7 L768.0 834.5 L769.5 862.4 L770.6 838.1 L772.1 858.1 L773.3 842.5 L774.7 854.1 L776.1 835.0 L776.9 860.7 L778.2 836.7 L779.5 856.5 L780.6 836.1 L782.1 854.9 L783.0 845.6 L783.8 858.0 L784.8 837.9 L786.1 854.5 L787.3 843.6 L788.5 855.3 L789.4 845.1 L790.5 859.6 L791.8 846.6 L793.1 860.8 L794.6 840.2 L795.4 856.9 L796.2 840.6 L797.2 858.9 L798.2 841.4 L799.2 853.1 L800.3 844.7 L801.8 855.1 L803.0 843.0 L804.6 853.4 L805.9 843.5 L807.3 859.9 L808.3 842.2 L809.5 856.7 L810.4 841.5 L812.0 855.0 L813.0 840.4 L813.9 852.9 L814.8 841.8 L816.2 855.5 L817.5 847.5 L818.8 855.4 L820.0 845.0 L821.1 853.8 L822.0 844.8 L823.0 857.0 L824.4 842.9 L825.6 853.8 L826.7 844.6 L828.0 858.5 L828.9 844.7 L830.1 856.8 L831.6 842.8 L832.9 857.0 L834.2 842.4 L835.6 856.5 L836.6 842.1 L837.7 856.0 L839.1 841.9 L840.7 852.1 L841.8 846.0 L842.9 853.0 L844.1 847.5 L845.2 857.8 L846.6 845.1 L847.5 857.9 L848.8 846.7 L849.9 855.9 L851.2 845.3 L852.8 856.7 L853.8 836.2 L854.7 863.3 L855.7 836.5 L856.7 861.4 L858.3 835.3 L859.4 869.0 L860.4 839.1" stroke="#679467" stroke-width="1.25" fill="none" stroke-linejoin="round"/><path d="M860 790.0V874.4H862V885.0H864V894.3H866V913.6H868V910.2H870V933.4H872V882.9H874V892.3H876V951.4H878V933.3H880V965.3H882V895.4H884V899.4H886V882.0H888V892.6H890V891.9H892V869.5H894V866.5H896V867.5H898V904.6H900V909.3H902V878.7H904V917.0H906V880.8H908V897.2H910V873.4H912V864.7H914V893.0H916V870.9H918V865.3H920V894.2H922V896.0H924V873.4H926V897.3H928V882.4H930V884.7H932V868.8H934V894.2H936V886.9H938V898.6H940V898.2H942V875.0H944V872.9H946V867.1H948V864.6H950V861.9H952V864.7H954V874.2H956V863.3H958V876.6H960V869.2H962V868.7H964V903.9H966V889.3H968V874.0H970V873.3H972V881.9H974V866.0H976V899.3H978V870.9H980V892.1H982V905.3H984V872.9H986V895.0H988V877.4H990V880.3H992V865.3H994V861.5H996V862.0H998V889.5H1000V869.2H1002V883.4H1004V900.6H1006V910.8H1008V881.0H1010V872.5H1012V875.9H1014V900.8H1016V876.1H1018V899.1H1020V895.1H1022V896.8H1024V869.9H1026V903.1H1028V873.3H1030V874.4H1032V892.4H1034V926.3H1036V890.4H1038V926.4H1040V900.8H1042V880.1H1044V873.7H1046V867.4H1048V864.6H1050V865.8H1052V887.7H1054V903.9H1056V873.2H1058V865.0H1060V907.9H1062V885.5H1064V874.4H1066V868.7H1068V889.8H1070V920.6H1072V893.9H1074V880.1H1076V865.5H1078V889.7H1080V867.5H1082V872.5H1084V890.5H1086V869.3H1088V885.9H1090V902.8H1092V888.6H1094V891.8H1096V868.8H1098V870.2H1100V862.5H1102V877.1H1104V866.0H1106V866.3H1108V883.3H1110V882.1H1112V886.4H1114V871.4H1116V868.4H1118V874.3H1120V869.0H1122V863.9H1124V864.7H1126V860.8H1128V863.4H1130V882.1H1132V885.7H1134V875.6H1136V869.8H1138V864.9H1140V860.4H1142V861.4H1144V874.3H1146V880.6H1148V868.2H1150V877.5H1152V881.4H1154V882.4H1156V885.7H1158V897.6H1160V881.3H1162V899.2H1164V878.3H1166V880.3H1168V892.6H1170V889.0H1172V872.7H1174V903.5H1176V894.7H1178V888.4H1180V868.0H1182V874.6H1184V865.9H1186V873.8H1188V869.1H1190V878.6H1192V875.7H1194V881.0H1196V869.2H1198V876.0H1200V883.2H1202V891.5H1204V874.8H1206V895.6H1208V905.0H1210V897.4H1212V917.1H1214V921.1H1216V892.7H1218V885.6H1220V869.9H1222V895.7H1224V907.6H1226V884.5H1228V889.1H1230V892.4H1232V894.8H1234V872.2H1236V893.9H1238V887.3H1240V888.9H1242V876.8H1244V880.4H1246V885.7H1248V879.5H1250V879.7H1252V864.2H1254V861.6H1256V867.5H1258V878.1H1260V867.5H1262V881.2H1264V880.6H1266V864.8H1268V867.8H1270V862.8H1272V859.7H1274V859.5H1276V861.9H1278V860.5H1280V860.3H1282V859.0H1284V864.8H1286V864.4H1288V869.9H1290V870.7H1292V863.6H1294V882.4H1296V865.5H1298V870.3H1300V867.6H1302V868.9H1304V862.1H1306V876.8H1308V867.3H1310V860.7H1312V869.0H1314V861.5H1316V867.3H1318V864.3H1320V869.0H1322V882.4H1324V880.7H1326V869.2H1328V877.4H1330V874.3H1332V867.0H1334V861.8H1336V871.1H1338V873.6H1340V893.3H1342V900.9H1344V885.5H1346V872.2H1348V889.7H1350V867.0H1352V861.7H1354V869.2H1356V871.8H1358V862.7H1360V870.0H1362V880.3H1364V868.2H1366V866.4H1368V862.2H1370V862.2H1372V881.2H1374V868.5H1376V882.4H1378V884.1H1380V790.0Z" fill="#6a986c"/><path d="M738 685V1012M786 685V1012M811 685V925M834.5 826V1012M858.5 765V962M882.4 850.0V1012M906.5 850.0V1012M930.6 850.0V1012M954.6 850.0V940M978.7 850.0V1012M1002.8 850.0V945M1026.8 850.0V1012M1050.9 850.0V1012M1075.0 850.0V1012M1099.1 850.0V1012M720.5 685V850M725.5 686V870M853.5 795V870M1035.8 850V997M1095.7 850V967M1073.8 850V1012M1119 850.0V930M1144.7 850.0V912M1170.5 850.0V965M1184.3 850.0V999M1210 850.0V967M1217 850.0V974M1227.3 850.0V900M1241 850.0V927M1250.4 850.0V1013M1299.6 850.0V922M1322 850.0V1013M1344.3 850.0V924M1368.4 850.0V920" stroke="#679467" stroke-width="1" fill="none"/><path d="M762.5 694V1010M738.3 685V1012M786.3 685V1012M882 850V1012M906 850V1012M954.3 850V1012M1026.3 850V1012M1184 850V1012" stroke="#679467" stroke-width="2" fill="none"/><path d="M778.5 914 L781 912 M778.5 914 C800 903 846 881 867 872 C885 864 915 857 934 855.5 C950 854.5 967 859 977.5 865 C985 870 988.5 885 990 903.5 C991 920 991 940 986 955 C981 968 972 981 963 983 C955 985 945 984 934 985 C925 987 910 987 899.5 991 C898 993 903 995 915 996 C940 998 975 996 1000.5 992 C1030 988 1060 981 1075.5 976.5 C1085 973 1092 973 1100.5 969.5 C1112 964 1130 954 1140 944.5 C1150 933 1162 914 1171.5 901.5 C1180 889 1194 868 1205 861 C1215 855 1228 851.5 1242.5 851.5 C1255 853 1262 857 1272 862 C1285 869 1308 888 1320 899.5" fill="none" stroke="#6a0505" stroke-width="2.8" stroke-linecap="round"/></svg></div><div class="win" style="left:859px;top:257px;width:614.5px;height:586.5px;"><div class="tb"></div><div class="tl " style="left:8px;top:4px"></div><div class="tl " style="left:29px;top:4px"></div><div class="tl " style="left:50px;top:4px"></div><div class="tt" style="left:306.5px;">Gridder</div><div class="pu" style="left:10px;top:32px;width:99.5px;height:15.6px;"><i></i><b>stratosamples</b></div><div class="pu" style="left:10px;top:54px;width:99.5px;height:15.6px;"><i></i><b>strato1_0.aif</b></div><div class="pu" style="left:10px;top:76px;width:99.5px;height:15.6px;"><i></i><b>sine</b></div><div class="pu" style="left:10px;top:98px;width:99.5px;height:15.6px;"><i></i></div><div class="tf" style="left:10px;top:120px;width:66px;height:12.5px;"></div><div class="bt" style="left:80px;top:120px;width:27.9px;height:13.8px;"><b>save</b></div><div class="bt" style="left:10.1px;top:146.9px;width:46.9px;height:16.1px;"><b>clear</b></div><div class="bt" style="left:60.1px;top:146.9px;width:46.9px;height:16.1px;"><b>fill</b></div><div class="fo" style="left:7px;top:169px;width:105.5px;height:13.5px;"></div><div class="sl" style="left:10px;top:172px;width:99.5px;height:7.5px;"><div class="kn" style="left:36.8px"></div></div><div class="t" style="left:10px;top:190px;">- resolution</div><div class="t" style="left:89px;top:190px;">24</div><div class="sl" style="left:10px;top:202px;width:99.5px;height:7.5px;"><div class="kn" style="left:40.5px"></div></div><div class="t" style="left:10px;top:220px;">- max freq</div><div class="t" style="left:89px;top:220px;">4000</div><div class="sl" style="left:10px;top:232px;width:69.5px;height:7.5px;"><div class="kn" style="left:11px"></div></div><div class="bt" style="left:83.1px;top:232.5px;width:27.8px;height:13.4px;"><b>set</b></div><div class="t" style="left:10px;top:250px;">- transp</div><div class="t" style="left:61px;top:250px;">1</div><div class="cb" style="left:10.0px;top:268px;width:11.5px;height:11.5px;"></div><div class="t" style="left:27.0px;top:275px;">1</div><div class="cb" style="left:10.0px;top:282.5px;width:11.5px;height:11.5px;"></div><div class="cb" style="left:35.2px;top:268px;width:11.5px;height:11.5px;"></div><div class="t" style="left:52.2px;top:275px;">2</div><div class="cb" style="left:35.2px;top:282.5px;width:11.5px;height:11.5px;"></div><div class="cb" style="left:60.4px;top:268px;width:11.5px;height:11.5px;"></div><div class="t" style="left:77.4px;top:275px;">3</div><div class="cb" style="left:60.4px;top:282.5px;width:11.5px;height:11.5px;"></div><div class="cb" style="left:85.6px;top:268px;width:11.5px;height:11.5px;"></div><div class="t" style="left:102.6px;top:275px;">4</div><div class="cb" style="left:85.6px;top:282.5px;width:11.5px;height:11.5px;"></div><div class="sl" style="left:10px;top:302px;width:99.5px;height:7.5px;"><div class="kn" style="left:11px"></div></div><div class="t" style="left:10px;top:320px;">- tempo</div><div class="t" style="left:89px;top:320px;">120</div><div class="sl" style="left:10px;top:332px;width:99.5px;height:7.5px;"><div class="kn" style="left:-0.5px"></div></div><div class="t" style="left:10px;top:350px;">- step size</div><div class="t" style="left:90px;top:350px;">1</div><div class="cb" style="left:10.5px;top:362.5px;width:13.5px;height:13.0px;"></div><div class="t" style="left:29px;top:370px;">actor breed</div><div class="t" style="left:10px;top:389px;">selected node :  [ 0, 0 ]</div><div class="cb" style="left:10.5px;top:402.5px;width:13.5px;height:13.0px;"></div><div class="t" style="left:29px;top:410px;">play mode</div><div class="cb" style="left:10.5px;top:422.5px;width:13.5px;height:13.0px;"></div><div class="t" style="left:29px;top:430px;">scale only</div><div class="sl" style="left:10px;top:442px;width:99.5px;height:7.5px;"><div class="kn" style="left:86px"></div></div><div class="t" style="left:10px;top:460px;">- vol</div><div class="t" style="left:91px;top:460px;">1</div><div class="pu" style="left:10px;top:470px;width:49.5px;height:16.1px;"><i></i><b>0, 1</b></div><div class="bt" style="left:65.5px;top:469.5px;width:44.4px;height:16.9px;"><b>start</b></div><svg class="a" style="left:0;top:0" width="614.5" height="586.5" viewBox="859 257 614.5 586.5"><rect x="979.6" y="289.6" width="460.8" height="460.3" fill="#fff" stroke="#000" stroke-width="1.3"/><path d="M998.3 289V750.5M979 308.3H1441M1016.7 289V750.5M979 326.7H1441M1035.1 289V750.5M979 345.1H1441M1053.5 289V750.5M979 363.5H1441M1072.0 289V750.5M979 381.9H1441M1090.4 289V750.5M979 400.3H1441M1108.8 289V750.5M979 418.7H1441M1127.2 289V750.5M979 437.1H1441M1145.6 289V750.5M979 455.5H1441M1164.0 289V750.5M979 473.9H1441M1182.4 289V750.5M979 492.3H1441M1200.8 289V750.5M979 510.7H1441M1219.2 289V750.5M979 529.1H1441M1237.6 289V750.5M979 547.5H1441M1256.1 289V750.5M979 565.9H1441M1274.5 289V750.5M979 584.3H1441M1292.9 289V750.5M979 602.7H1441M1311.3 289V750.5M979 621.1H1441M1329.7 289V750.5M979 639.5H1441M1348.1 289V750.5M979 657.9H1441M1366.5 289V750.5M979 676.3H1441M1384.9 289V750.5M979 694.7H1441M1403.3 289V750.5M979 713.1H1441M1421.7 289V750.5M979 731.5H1441M1457.5 290V750.5M1450.5 308.3H1464.5M1450.5 326.7H1464.5M1450.5 345.1H1464.5M1450.5 363.5H1464.5M1450.5 381.9H1464.5M1450.5 400.3H1464.5M1450.5 418.7H1464.5M1450.5 437.1H1464.5M1450.5 455.5H1464.5M1450.5 473.9H1464.5M1450.5 492.3H1464.5M1450.5 510.7H1464.5M1450.5 529.1H1464.5M1450.5 547.5H1464.5M1450.5 565.9H1464.5M1450.5 584.3H1464.5M1450.5 602.7H1464.5M1450.5 621.1H1464.5M1450.5 639.5H1464.5M1450.5 657.9H1464.5M1450.5 676.3H1464.5M1450.5 694.7H1464.5M1450.5 713.1H1464.5M1450.5 731.5H1464.5M981 763.5H1446M998.3 756.5V770.5M1016.7 756.5V770.5M1035.1 756.5V770.5M1053.5 756.5V770.5M1072.0 756.5V770.5M1090.4 756.5V770.5M1108.8 756.5V770.5M1127.2 756.5V770.5M1145.6 756.5V770.5M1164.0 756.5V770.5M1182.4 756.5V770.5M1200.8 756.5V770.5M1219.2 756.5V770.5M1237.6 756.5V770.5M1256.1 756.5V770.5M1274.5 756.5V770.5M1292.9 756.5V770.5M1311.3 756.5V770.5M1329.7 756.5V770.5M1348.1 756.5V770.5M1366.5 756.5V770.5M1384.9 756.5V770.5M1403.3 756.5V770.5M1421.7 756.5V770.5" stroke="#000" stroke-width="1.15" fill="none"/><path d="M993.3 303.3h10v10h-10zM993.3 321.7h10v10h-10zM993.3 340.1h10v10h-10zM993.3 358.5h10v10h-10zM993.3 376.9h10v10h-10zM993.3 395.3h10v10h-10zM993.3 413.7h10v10h-10zM993.3 432.1h10v10h-10zM993.3 450.5h10v10h-10zM993.3 468.9h10v10h-10zM993.3 487.3h10v10h-10zM993.3 505.7h10v10h-10zM993.3 524.1h10v10h-10zM993.3 542.5h10v10h-10zM993.3 560.9h10v10h-10zM993.3 579.3h10v10h-10zM993.3 597.7h10v10h-10zM993.3 616.1h10v10h-10zM993.3 634.5h10v10h-10zM993.3 652.9h10v10h-10zM993.3 671.3h10v10h-10zM993.3 689.7h10v10h-10zM993.3 708.1h10v10h-10zM993.3 726.5h10v10h-10zM993.8 759h9v9h-9zM1048.5 303.3h10v10h-10zM1048.5 321.7h10v10h-10zM1048.5 340.1h10v10h-10zM1048.5 358.5h10v10h-10zM1048.5 376.9h10v10h-10zM1048.5 395.3h10v10h-10zM1048.5 413.7h10v10h-10zM1048.5 432.1h10v10h-10zM1048.5 450.5h10v10h-10zM1048.5 468.9h10v10h-10zM1048.5 487.3h10v10h-10zM1048.5 505.7h10v10h-10zM1048.5 524.1h10v10h-10zM1048.5 542.5h10v10h-10zM1048.5 560.9h10v10h-10zM1048.5 579.3h10v10h-10zM1048.5 597.7h10v10h-10zM1048.5 616.1h10v10h-10zM1048.5 634.5h10v10h-10zM1048.5 652.9h10v10h-10zM1048.5 671.3h10v10h-10zM1048.5 689.7h10v10h-10zM1048.5 708.1h10v10h-10zM1048.5 726.5h10v10h-10zM1049.0 759h9v9h-9zM1085.4 303.3h10v10h-10zM1085.4 321.7h10v10h-10zM1085.4 340.1h10v10h-10zM1085.4 358.5h10v10h-10zM1085.4 376.9h10v10h-10zM1085.4 395.3h10v10h-10zM1085.4 413.7h10v10h-10zM1085.4 432.1h10v10h-10zM1085.4 450.5h10v10h-10zM1085.4 468.9h10v10h-10zM1085.4 487.3h10v10h-10zM1085.4 505.7h10v10h-10zM1085.4 524.1h10v10h-10zM1085.4 542.5h10v10h-10zM1085.4 560.9h10v10h-10zM1085.4 579.3h10v10h-10zM1085.4 597.7h10v10h-10zM1085.4 616.1h10v10h-10zM1085.4 634.5h10v10h-10zM1085.4 652.9h10v10h-10zM1085.4 671.3h10v10h-10zM1085.4 689.7h10v10h-10zM1085.4 708.1h10v10h-10zM1085.4 726.5h10v10h-10zM1085.9 759h9v9h-9zM1159.0 303.3h10v10h-10zM1159.0 321.7h10v10h-10zM1159.0 340.1h10v10h-10zM1159.0 358.5h10v10h-10zM1159.0 376.9h10v10h-10zM1159.0 395.3h10v10h-10zM1159.0 413.7h10v10h-10zM1159.0 432.1h10v10h-10zM1159.0 450.5h10v10h-10zM1159.0 468.9h10v10h-10zM1159.0 487.3h10v10h-10zM1159.0 505.7h10v10h-10zM1159.0 524.1h10v10h-10zM1159.0 542.5h10v10h-10zM1159.0 560.9h10v10h-10zM1159.0 579.3h10v10h-10zM1159.0 597.7h10v10h-10zM1159.0 616.1h10v10h-10zM1159.0 634.5h10v10h-10zM1159.0 652.9h10v10h-10zM1159.0 671.3h10v10h-10zM1159.0 689.7h10v10h-10zM1159.0 708.1h10v10h-10zM1159.0 726.5h10v10h-10zM1159.5 759h9v9h-9zM1177.4 303.3h10v10h-10zM1177.4 321.7h10v10h-10zM1177.4 340.1h10v10h-10zM1177.4 358.5h10v10h-10zM1177.4 376.9h10v10h-10zM1177.4 395.3h10v10h-10zM1177.4 413.7h10v10h-10zM1177.4 432.1h10v10h-10zM1177.4 450.5h10v10h-10zM1177.4 468.9h10v10h-10zM1177.4 487.3h10v10h-10zM1177.4 505.7h10v10h-10zM1177.4 524.1h10v10h-10zM1177.4 542.5h10v10h-10zM1177.4 560.9h10v10h-10zM1177.4 579.3h10v10h-10zM1177.4 597.7h10v10h-10zM1177.4 616.1h10v10h-10zM1177.4 634.5h10v10h-10zM1177.4 652.9h10v10h-10zM1177.4 671.3h10v10h-10zM1177.4 689.7h10v10h-10zM1177.4 708.1h10v10h-10zM1177.4 726.5h10v10h-10zM1177.9 759h9v9h-9zM1251.1 303.3h10v10h-10zM1251.1 321.7h10v10h-10zM1251.1 340.1h10v10h-10zM1251.1 358.5h10v10h-10zM1251.1 376.9h10v10h-10zM1251.1 395.3h10v10h-10zM1251.1 413.7h10v10h-10zM1251.1 432.1h10v10h-10zM1251.1 450.5h10v10h-10zM1251.1 468.9h10v10h-10zM1251.1 487.3h10v10h-10zM1251.1 505.7h10v10h-10zM1251.1 524.1h10v10h-10zM1251.1 542.5h10v10h-10zM1251.1 560.9h10v10h-10zM1251.1 579.3h10v10h-10zM1251.1 597.7h10v10h-10zM1251.1 616.1h10v10h-10zM1251.1 634.5h10v10h-10zM1251.1 652.9h10v10h-10zM1251.1 671.3h10v10h-10zM1251.1 689.7h10v10h-10zM1251.1 708.1h10v10h-10zM1251.1 726.5h10v10h-10zM1251.6 759h9v9h-9zM1269.5 303.3h10v10h-10zM1269.5 321.7h10v10h-10zM1269.5 340.1h10v10h-10zM1269.5 358.5h10v10h-10zM1269.5 376.9h10v10h-10zM1269.5 395.3h10v10h-10zM1269.5 413.7h10v10h-10zM1269.5 432.1h10v10h-10zM1269.5 450.5h10v10h-10zM1269.5 468.9h10v10h-10zM1269.5 487.3h10v10h-10zM1269.5 505.7h10v10h-10zM1269.5 524.1h10v10h-10zM1269.5 542.5h10v10h-10zM1269.5 560.9h10v10h-10zM1269.5 579.3h10v10h-10zM1269.5 597.7h10v10h-10zM1269.5 616.1h10v10h-10zM1269.5 634.5h10v10h-10zM1269.5 652.9h10v10h-10zM1269.5 671.3h10v10h-10zM1269.5 689.7h10v10h-10zM1269.5 708.1h10v10h-10zM1269.5 726.5h10v10h-10zM1270.0 759h9v9h-9zM1343.1 303.3h10v10h-10zM1343.1 321.7h10v10h-10zM1343.1 340.1h10v10h-10zM1343.1 358.5h10v10h-10zM1343.1 376.9h10v10h-10zM1343.1 395.3h10v10h-10zM1343.1 413.7h10v10h-10zM1343.1 432.1h10v10h-10zM1343.1 450.5h10v10h-10zM1343.1 468.9h10v10h-10zM1343.1 487.3h10v10h-10zM1343.1 505.7h10v10h-10zM1343.1 524.1h10v10h-10zM1343.1 542.5h10v10h-10zM1343.1 560.9h10v10h-10zM1343.1 579.3h10v10h-10zM1343.1 597.7h10v10h-10zM1343.1 616.1h10v10h-10zM1343.1 634.5h10v10h-10zM1343.1 652.9h10v10h-10zM1343.1 671.3h10v10h-10zM1343.1 689.7h10v10h-10zM1343.1 708.1h10v10h-10zM1343.1 726.5h10v10h-10zM1343.6 759h9v9h-9zM1379.9 303.3h10v10h-10zM1379.9 321.7h10v10h-10zM1379.9 340.1h10v10h-10zM1379.9 358.5h10v10h-10zM1379.9 376.9h10v10h-10zM1379.9 395.3h10v10h-10zM1379.9 413.7h10v10h-10zM1379.9 432.1h10v10h-10zM1379.9 450.5h10v10h-10zM1379.9 468.9h10v10h-10zM1379.9 487.3h10v10h-10zM1379.9 505.7h10v10h-10zM1379.9 524.1h10v10h-10zM1379.9 542.5h10v10h-10zM1379.9 560.9h10v10h-10zM1379.9 579.3h10v10h-10zM1379.9 597.7h10v10h-10zM1379.9 616.1h10v10h-10zM1379.9 634.5h10v10h-10zM1379.9 652.9h10v10h-10zM1379.9 671.3h10v10h-10zM1379.9 689.7h10v10h-10zM1379.9 708.1h10v10h-10zM1379.9 726.5h10v10h-10zM1380.4 759h9v9h-9zM1398.3 303.3h10v10h-10zM1398.3 321.7h10v10h-10zM1398.3 340.1h10v10h-10zM1398.3 358.5h10v10h-10zM1398.3 376.9h10v10h-10zM1398.3 395.3h10v10h-10zM1398.3 413.7h10v10h-10zM1398.3 432.1h10v10h-10zM1398.3 450.5h10v10h-10zM1398.3 468.9h10v10h-10zM1398.3 487.3h10v10h-10zM1398.3 505.7h10v10h-10zM1398.3 524.1h10v10h-10zM1398.3 542.5h10v10h-10zM1398.3 560.9h10v10h-10zM1398.3 579.3h10v10h-10zM1398.3 597.7h10v10h-10zM1398.3 616.1h10v10h-10zM1398.3 634.5h10v10h-10zM1398.3 652.9h10v10h-10zM1398.3 671.3h10v10h-10zM1398.3 689.7h10v10h-10zM1398.3 708.1h10v10h-10zM1398.3 726.5h10v10h-10zM1398.8 759h9v9h-9z" fill="#6a986a" stroke="#0e1e0e" stroke-width="1.2"/><rect x="979.5" y="779" width="488.4" height="50" fill="#fff" stroke="#555" stroke-width="1"/><path d="M988.9 779V829M998.3 779V829M1007.7 779V829M1017.1 779V829M1026.5 779V829M1035.9 779V829M1045.3 779V829M1054.6 779V829M1064.0 779V829M1073.4 779V829M1082.8 779V829M1092.2 779V829M1101.6 779V829M1111.0 779V829M1120.4 779V829M1129.8 779V829M1139.2 779V829M1148.6 779V829M1158.0 779V829M1167.4 779V829M1176.8 779V829M1186.1 779V829M1195.5 779V829M1204.9 779V829M1214.3 779V829M1223.7 779V829M1233.1 779V829M1242.5 779V829M1251.9 779V829M1261.3 779V829M1270.7 779V829M1280.1 779V829M1289.5 779V829M1298.9 779V829M1308.3 779V829M1317.6 779V829M1327.0 779V829M1336.4 779V829M1345.8 779V829M1355.2 779V829M1364.6 779V829M1374.0 779V829M1383.4 779V829M1392.8 779V829M1402.2 779V829M1411.6 779V829M1421.0 779V829M1430.4 779V829M1439.8 779V829M1449.2 779V829M1458.5 779V829" stroke="#666" stroke-width=".8" fill="none"/><path d="M985.2 779h7.5V809.4h-7.5zM994.6 779h7.5V809.4h-7.5zM1013.4 779h7.5V809.4h-7.5zM1022.8 779h7.5V809.4h-7.5zM1032.2 779h7.5V809.4h-7.5zM1050.9 779h7.5V809.4h-7.5zM1060.3 779h7.5V809.4h-7.5zM1079.1 779h7.5V809.4h-7.5zM1088.5 779h7.5V809.4h-7.5zM1097.9 779h7.5V809.4h-7.5zM1116.7 779h7.5V809.4h-7.5zM1126.1 779h7.5V809.4h-7.5zM1144.9 779h7.5V809.4h-7.5zM1154.3 779h7.5V809.4h-7.5zM1163.7 779h7.5V809.4h-7.5zM1182.4 779h7.5V809.4h-7.5zM1191.8 779h7.5V809.4h-7.5zM1210.6 779h7.5V809.4h-7.5zM1220.0 779h7.5V809.4h-7.5zM1229.4 779h7.5V809.4h-7.5zM1248.2 779h7.5V809.4h-7.5zM1257.6 779h7.5V809.4h-7.5zM1276.4 779h7.5V809.4h-7.5zM1285.8 779h7.5V809.4h-7.5zM1295.2 779h7.5V809.4h-7.5zM1313.9 779h7.5V809.4h-7.5zM1323.3 779h7.5V809.4h-7.5zM1342.1 779h7.5V809.4h-7.5zM1351.5 779h7.5V809.4h-7.5zM1360.9 779h7.5V809.4h-7.5zM1379.7 779h7.5V809.4h-7.5zM1389.1 779h7.5V809.4h-7.5zM1407.9 779h7.5V809.4h-7.5zM1417.3 779h7.5V809.4h-7.5zM1426.7 779h7.5V809.4h-7.5zM1445.5 779h7.5V809.4h-7.5zM1454.8 779h7.5V809.4h-7.5z" fill="#000"/></svg></div><div class="win" style="left:1479px;top:257px;width:309px;height:171.5px;"><div class="tb"></div><div class="tl " style="left:8px;top:4px"></div><div class="tl " style="left:29px;top:4px"></div><div class="tl " style="left:50px;top:4px"></div><div class="tt" style="left:154.5px;">Freeverb 2x2</div><div class="t" style="left:10px;top:34.3px;">in</div><div class="pu" style="left:22px;top:27.3px;width:39.5px;height:14.6px;"><i></i><b>0, 1</b></div><div class="t" style="left:68px;top:34.3px;">out</div><div class="pu" style="left:86px;top:27.3px;width:39.5px;height:14.6px;"><i></i><b>0, 1</b></div><div class="t" style="left:133px;top:34.3px;">Tgt</div><div class="tf tfb" style="left:151px;top:27.3px;width:25px;height:14.0px;"><b>1</b></div><div class="pu pug" style="left:181px;top:27.3px;width:59px;height:14.6px;"><i></i><b>addToTail</b></div><div class="bt" style="left:246px;top:27.3px;width:12.4px;height:14.4px;background:#bdbdbd"><b>#</b></div><div class="fo" style="left:259.7px;top:24.0px;width:35.9px;height:20.9px;"></div><div class="bt bg" style="left:263px;top:27.3px;width:29.4px;height:14.4px;"><b>Off</b></div><div class="t r" style="left:55px;top:54.0px;">Room</div><div class="es" style="left:60px;top:47.0px;width:187.5px;height:14.5px;"></div><div class="t r" style="left:55px;top:74.0px;">Damp</div><div class="es" style="left:60px;top:67.0px;width:187.5px;height:14.5px;"></div><div class="t r" style="left:55px;top:94.0px;">Dry/Wet</div><div class="es" style="left:60px;top:87.0px;width:187.5px;height:14.5px;"><div class="ek" style="left:133px"></div></div><div class="t r" style="left:55px;top:114.0px;">Fx Level</div><div class="es" style="left:60px;top:107.0px;width:187.5px;height:14.5px;"></div><div class="t r" style="left:55px;top:134.0px;">Dry Level</div><div class="es" style="left:60px;top:127.0px;width:187.5px;height:14.5px;"><div class="ek" style="left:78px"></div></div><div class="t r" style="left:55px;top:153.7px;">nodeID</div><div class="t" style="left:60px;top:153.7px;">none</div></div><div class="win" style="left:1368px;top:430.5px;width:309px;height:172.5px;"><div class="tb"></div><div class="tl " style="left:8px;top:4px"></div><div class="tl " style="left:29px;top:4px"></div><div class="tl " style="left:50px;top:4px"></div><div class="tt" style="left:154.5px;">CyberPunk 2x2</div><div class="t" style="left:10px;top:34.5px;">in</div><div class="pu" style="left:22px;top:27.5px;width:39.5px;height:14.6px;"><i></i><b>8, 9</b></div><div class="t" style="left:68px;top:34.5px;">out</div><div class="pu" style="left:86px;top:27.5px;width:39.5px;height:14.6px;"><i></i><b>0, 1</b></div><div class="t" style="left:133px;top:34.5px;">Tgt</div><div class="tf tfb" style="left:151px;top:27.5px;width:25px;height:14.0px;"><b>1</b></div><div class="pu pug" style="left:181px;top:27.5px;width:59px;height:14.6px;"><i></i><b>addToTail</b></div><div class="bt" style="left:246px;top:27.5px;width:12.4px;height:14.4px;background:#bdbdbd"><b>#</b></div><div class="fo" style="left:259.7px;top:24.2px;width:35.9px;height:20.9px;"></div><div class="bt bg" style="left:263px;top:27.5px;width:29.4px;height:14.4px;"><b>Off</b></div><div class="t r" style="left:55px;top:54.5px;">PitchRatio</div><div class="es" style="left:60px;top:47.5px;width:187.5px;height:14.5px;"><div class="ek" style="left:19.5px"></div></div><div class="tf tfb" style="left:253px;top:47.5px;width:39.5px;height:14.5px;"><b>2</b></div><div class="t r" style="left:55px;top:74.5px;">CyperPunk</div><div class="es" style="left:60px;top:67.5px;width:187.5px;height:14.5px;"><div class="ek" style="left:0px"></div></div><div class="tf tfb" style="left:253px;top:67.5px;width:39.5px;height:14.5px;"><b>1</b></div><div class="t r" style="left:55px;top:94.5px;">Memlen</div><div class="es" style="left:60px;top:87.5px;width:187.5px;height:14.5px;"><div class="ek" style="left:86.5px"></div></div><div class="tf tfb" style="left:253px;top:87.5px;width:39.5px;height:14.5px;"><b>0.1</b></div><div class="t r" style="left:55px;top:114.5px;">Fx Level</div><div class="es" style="left:60px;top:107.5px;width:187.5px;height:14.5px;"><div class="ek" style="left:174px"></div></div><div class="tf tfb" style="left:253px;top:107.5px;width:39.5px;height:14.5px;"><b>1</b></div><div class="t r" style="left:55px;top:134.5px;">Dry Level</div><div class="es" style="left:60px;top:127.5px;width:187.5px;height:14.5px;"><div class="ek" style="left:0px"></div></div><div class="tf tfb" style="left:253px;top:127.5px;width:39.5px;height:14.5px;"><b>0</b></div><div class="t r" style="left:55px;top:154.2px;">nodeID</div><div class="t" style="left:60px;top:154.2px;">1165</div></div><div class="win" style="left:1368.5px;top:606px;width:309px;height:171.5px;"><div class="tb"></div><div class="tl " style="left:8.0px;top:4px"></div><div class="tl " style="left:29.0px;top:4px"></div><div class="tl " style="left:50.0px;top:4px"></div><div class="tt" style="left:155.0px;">Chorus 2x2</div><div class="t" style="left:10.0px;top:34.0px;">in</div><div class="pu" style="left:22.0px;top:27.0px;width:39.5px;height:14.6px;"><i></i><b>22, 23</b></div><div class="t" style="left:68.0px;top:34.0px;">out</div><div class="pu" style="left:86.0px;top:27.0px;width:39.5px;height:14.6px;"><i></i><b>0, 1</b></div><div class="t" style="left:133.0px;top:34.0px;">Tgt</div><div class="tf tfb" style="left:151.0px;top:27.0px;width:25.0px;height:14.0px;"><b>1</b></div><div class="pu pug" style="left:181.0px;top:27.0px;width:59.0px;height:14.6px;"><i></i><b>addToTail</b></div><div class="bt" style="left:246.0px;top:27.0px;width:12.4px;height:14.4px;background:#bdbdbd"><b>#</b></div><div class="fo" style="left:259.7px;top:23.7px;width:35.9px;height:20.9px;"></div><div class="bt bg" style="left:263.0px;top:27.0px;width:29.4px;height:14.4px;"><b>Off</b></div><div class="t r" style="left:55.0px;top:54.0px;">PreDelay</div><div class="es" style="left:60.0px;top:47.0px;width:187.5px;height:14.5px;"><div class="ek" style="left:70.5px"></div></div><div class="tf tfb" style="left:253.0px;top:47.0px;width:39.5px;height:14.5px;"><b>0.08</b></div><div class="t r" style="left:55.0px;top:74.0px;">Depth</div><div class="es" style="left:60.0px;top:67.0px;width:187.5px;height:14.5px;"><div class="ek" style="left:123.5px"></div></div><div class="tf tfb" style="left:253.0px;top:67.0px;width:39.5px;height:14.5px;"><b>0.05</b></div><div class="t r" style="left:55.0px;top:94.0px;">Speed</div><div class="es" style="left:60.0px;top:87.0px;width:187.5px;height:14.5px;"><div class="ek" style="left:129.5px"></div></div><div class="tf tfb" style="left:253.0px;top:87.0px;width:39.5px;height:14.5px;"><b>0.1</b></div><div class="t r" style="left:55.0px;top:114.0px;">Fx Level</div><div class="es" style="left:60.0px;top:107.0px;width:187.5px;height:14.5px;"><div class="ek" style="left:123.5px"></div></div><div class="tf tfb" style="left:253.0px;top:107.0px;width:39.5px;height:14.5px;"><b>0.5</b></div><div class="t r" style="left:55.0px;top:134.0px;">Dry Level</div><div class="es" style="left:60.0px;top:127.0px;width:187.5px;height:14.5px;"><div class="ek" style="left:0.0px"></div></div><div class="tf tfb" style="left:253.0px;top:127.0px;width:39.5px;height:14.5px;"><b>0</b></div><div class="t r" style="left:55.0px;top:153.7px;">nodeID</div><div class="t" style="left:60.0px;top:153.7px;">1162</div></div><div class="win" style="left:1370px;top:781px;width:330px;height:260px;background:#a2a2a2;box-shadow:0 0 0 .5px rgba(0,0,0,.5),0 8px 22px 3px rgba(0,0,0,.6)"><div class="tb tba"></div><div class="tl tlr" style="left:8px;top:4px"></div><div class="tl tly" style="left:29px;top:4px"></div><div class="tl " style="left:50px;top:4px"></div><div class="tt" style="left:259.5px;color:#000;">EQ Meter</div><div class="a" style="left:0px;top:22px;width:330px;height:238px;background:#a0a0a0"></div><div class="a" style="left:10px;top:27px;width:320px;height:200px;background:#001500"></div><div class="a" style="left:10.6px;top:213.5px;width:15px;height:13px;background:#00ff00;border:1px solid #0bd00b;border-bottom:none"></div><div class="a" style="left:26.6px;top:213.5px;width:15px;height:13px;background:#00ff00;border:1px solid #0bd00b;border-bottom:none"></div><div class="a" style="left:42.6px;top:213.5px;width:15px;height:13px;background:#00ff00;border:1px solid #0bd00b;border-bottom:none"></div><div class="a" style="left:58.6px;top:213.5px;width:15px;height:13px;background:#00ff00;border:1px solid #0bd00b;border-bottom:none"></div><div class="a" style="left:74.6px;top:213.5px;width:15px;height:13px;background:#00ff00;border:1px solid #0bd00b;border-bottom:none"></div><div class="a" style="left:90.6px;top:213.5px;width:15px;height:13px;background:#00ff00;border:1px solid #0bd00b;border-bottom:none"></div><div class="a" style="left:106.6px;top:213.5px;width:15px;height:13px;background:#00ff00;border:1px solid #0bd00b;border-bottom:none"></div><div class="a" style="left:122.6px;top:213.5px;width:15px;height:13px;background:#00ff00;border:1px solid #0bd00b;border-bottom:none"></div><div class="a" style="left:138.6px;top:213.5px;width:15px;height:13px;background:#00ff00;border:1px solid #0bd00b;border-bottom:none"></div><div class="a" style="left:154.6px;top:168.0px;width:15px;height:58.5px;background:#00ff00;border:1px solid #0bd00b;border-bottom:none"></div><div class="a" style="left:170.6px;top:138.0px;width:15px;height:88.5px;background:#00ff00;border:1px solid #0bd00b;border-bottom:none"></div><div class="a" style="left:186.6px;top:210.0px;width:15px;height:16.5px;background:#00ff00;border:1px solid #0bd00b;border-bottom:none"></div><div class="a" style="left:202.6px;top:102.0px;width:15px;height:124.5px;background:#00ff00;border:1px solid #0bd00b;border-bottom:none"></div><div class="a" style="left:218.6px;top:80.0px;width:15px;height:146.5px;background:#00ff00;border:1px solid #0bd00b;border-bottom:none"></div><div class="a" style="left:234.6px;top:196.0px;width:15px;height:30.5px;background:#00ff00;border:1px solid #0bd00b;border-bottom:none"></div><div class="a" style="left:250.6px;top:213.5px;width:15px;height:13px;background:#00ff00;border:1px solid #0bd00b;border-bottom:none"></div><div class="a" style="left:266.6px;top:196.0px;width:15px;height:30.5px;background:#00ff00;border:1px solid #0bd00b;border-bottom:none"></div><div class="a" style="left:282.6px;top:194.5px;width:15px;height:32px;background:#00ff00;border:1px solid #0bd00b;border-bottom:none"></div><div class="a" style="left:298.6px;top:182.5px;width:15px;height:44px;background:#00ff00;border:1px solid #0bd00b;border-bottom:none"></div><div class="a" style="left:314.6px;top:176.5px;width:15px;height:50px;background:#00ff00;border:1px solid #0bd00b;border-bottom:none"></div><div class="t" style="left:12px;top:241px;">inbus</div><div class="pu" style="left:40px;top:234px;width:39.5px;height:15.6px;"><i></i><b>8, 9</b></div><div class="t" style="left:92px;top:241px;">bands</div><div class="pu" style="left:123px;top:234px;width:65px;height:15.6px;"><i></i><b>filled</b></div><div class="t" style="left:200px;top:241px;">colors</div><div class="cb" style="left:230px;top:231px;width:12px;height:12px;background:#ababab;border-color:#e2e2e2 #666 #666 #e2e2e2"></div><div class="cb cbg" style="left:230px;top:244.5px;width:12px;height:11.5px;"></div><div class="t" style="left:247px;top:239px;">stroke</div><div class="pu" style="left:285px;top:234px;width:45px;height:15.6px;"><i></i></div></div></body></html>
